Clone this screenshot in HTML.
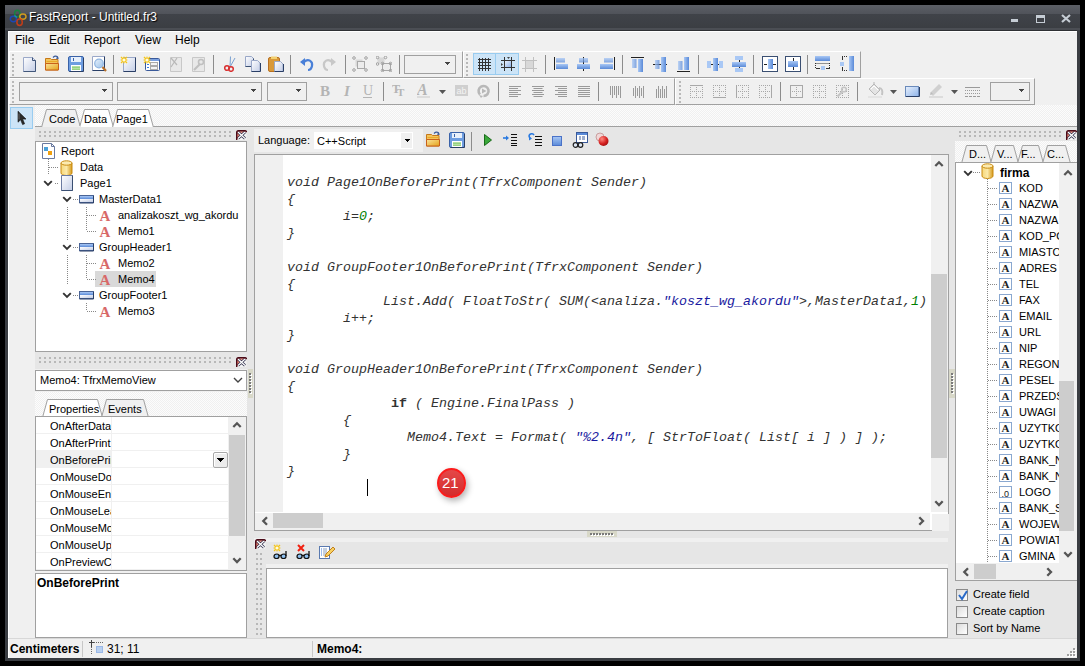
<!DOCTYPE html><html><head><meta charset="utf-8"><style>
*{margin:0;padding:0;box-sizing:border-box}
html,body{width:1085px;height:666px;overflow:hidden;background:#000}
body{position:relative;font-family:"Liberation Sans",sans-serif;font-size:11px;color:#000}
div{position:absolute}
.t{white-space:pre;line-height:13px}
.code{font-family:"Liberation Mono",monospace;font-style:italic;font-size:13.333px;white-space:pre;line-height:17px;color:#333}
</style></head><body>
<svg width="0" height="0" style="position:absolute"><defs>
<linearGradient id="gPage" x1="0" y1="0" x2="1" y2="1"><stop offset="0" stop-color="#ffffff"/><stop offset="1" stop-color="#c3cde6"/></linearGradient>
<linearGradient id="gFold" x1="0" y1="0" x2="1" y2="1"><stop offset="0" stop-color="#fbe39a"/><stop offset="1" stop-color="#e3a21a"/></linearGradient>
<linearGradient id="gBlue" x1="0" y1="0" x2="0" y2="1"><stop offset="0" stop-color="#a9c8f5"/><stop offset="1" stop-color="#5a8ad8"/></linearGradient>
<linearGradient id="gBlueH" x1="0" y1="0" x2="1" y2="0"><stop offset="0" stop-color="#a9c8f5"/><stop offset="1" stop-color="#5a8ad8"/></linearGradient>
<linearGradient id="gCyl" x1="0" y1="0" x2="1" y2="0"><stop offset="0" stop-color="#f7d87a"/><stop offset="0.5" stop-color="#fbe9a8"/><stop offset="1" stop-color="#d69a1c"/></linearGradient>
<linearGradient id="gRect" x1="0" y1="0" x2="1" y2="1"><stop offset="0" stop-color="#e8f1fd"/><stop offset="1" stop-color="#8fb4ea"/></linearGradient>
<radialGradient id="gRed" cx="0.35" cy="0.3" r="0.8"><stop offset="0" stop-color="#ff8a80"/><stop offset="0.6" stop-color="#d42020"/><stop offset="1" stop-color="#9a0c0c"/></radialGradient>
<radialGradient id="gBadge" cx="0.4" cy="0.3" r="0.8"><stop offset="0" stop-color="#ff5a4a"/><stop offset="0.7" stop-color="#e0221a"/><stop offset="1" stop-color="#b01410"/></radialGradient>
<linearGradient id="gGlass" x1="0" y1="0" x2="1" y2="1"><stop offset="0" stop-color="#e6f0fb"/><stop offset="1" stop-color="#9cc2ea"/></linearGradient>
</defs></svg>
<div style="left:5px;top:5px;width:1075px;height:656px;background:#3a3d42"></div>
<div style="left:5px;top:5px;width:1075px;height:9px;background:linear-gradient(#5c5f66,#50535a)"></div>
<div style="left:5px;top:14px;width:1075px;height:14px;background:linear-gradient(#404349,#3b3e43)"></div>
<div style="left:5px;top:28px;width:1075px;height:2px;background:#4b4e54"></div>
<div style="left:8px;top:30px;width:1069px;height:1px;background:#2e3034"></div>
<div style="left:8px;top:31px;width:1069px;height:627px;background:#f0f0f0;border-top:1px solid #fff;border-left:1px solid #fff"></div>
<div class="t" style="left:29px;top:10px;color:#fff;font-size:12px;line-height:15px;text-shadow:1px 1px 1px #000">FastReport - Untitled.fr3</div>
<div class="t" style="left:15px;top:33px;font-size:12px;line-height:15px">File</div>
<div class="t" style="left:49px;top:33px;font-size:12px;line-height:15px">Edit</div>
<div class="t" style="left:84px;top:33px;font-size:12px;line-height:15px">Report</div>
<div class="t" style="left:135px;top:33px;font-size:12px;line-height:15px">View</div>
<div class="t" style="left:175px;top:33px;font-size:12px;line-height:15px">Help</div>
<div style="left:9px;top:51px;width:454px;height:27px;background:#f0f0f0;border-top:1px solid #fff;border-left:1px solid #fff;border-bottom:1px solid #a0a0a0;border-right:1px solid #a0a0a0"></div>
<div style="left:463px;top:51px;width:398px;height:27px;background:#f0f0f0;border-top:1px solid #fff;border-left:1px solid #fff;border-bottom:1px solid #a0a0a0;border-right:1px solid #a0a0a0"></div>
<div style="left:9px;top:78px;width:666px;height:27px;background:#f0f0f0;border-top:1px solid #fff;border-left:1px solid #fff;border-bottom:1px solid #a0a0a0;border-right:1px solid #a0a0a0"></div>
<div style="left:675px;top:78px;width:360px;height:27px;background:#f0f0f0;border-top:1px solid #fff;border-left:1px solid #fff;border-bottom:1px solid #a0a0a0;border-right:1px solid #a0a0a0"></div>
<div style="left:12px;top:54px;width:3px;height:22px;background:conic-gradient(from 270deg at 2px 2px,#b8b8b8 90deg,transparent 0) 0 0/3px 4px"></div>
<div style="left:466px;top:54px;width:3px;height:22px;background:conic-gradient(from 270deg at 2px 2px,#b8b8b8 90deg,transparent 0) 0 0/3px 4px"></div>
<div style="left:12px;top:81px;width:3px;height:22px;background:conic-gradient(from 270deg at 2px 2px,#b8b8b8 90deg,transparent 0) 0 0/3px 4px"></div>
<div style="left:679px;top:81px;width:3px;height:22px;background:conic-gradient(from 270deg at 2px 2px,#b8b8b8 90deg,transparent 0) 0 0/3px 4px"></div>
<div style="left:113px;top:55px;width:1px;height:19px;background:#8c8c8c"></div>
<div style="left:213px;top:55px;width:1px;height:19px;background:#8c8c8c"></div>
<div style="left:290px;top:55px;width:1px;height:19px;background:#8c8c8c"></div>
<div style="left:345px;top:55px;width:1px;height:19px;background:#8c8c8c"></div>
<div style="left:399px;top:55px;width:1px;height:19px;background:#8c8c8c"></div>
<div style="left:545px;top:55px;width:1px;height:19px;background:#8c8c8c"></div>
<div style="left:622px;top:55px;width:1px;height:19px;background:#8c8c8c"></div>
<div style="left:698px;top:55px;width:1px;height:19px;background:#8c8c8c"></div>
<div style="left:753px;top:55px;width:1px;height:19px;background:#8c8c8c"></div>
<div style="left:807px;top:55px;width:1px;height:19px;background:#8c8c8c"></div>
<div style="left:383px;top:82px;width:1px;height:19px;background:#8c8c8c"></div>
<div style="left:498px;top:82px;width:1px;height:19px;background:#8c8c8c"></div>
<div style="left:598px;top:82px;width:1px;height:19px;background:#8c8c8c"></div>
<div style="left:780px;top:82px;width:1px;height:19px;background:#8c8c8c"></div>
<div style="left:857px;top:82px;width:1px;height:19px;background:#8c8c8c"></div>
<div style="left:404px;top:55px;width:52px;height:19px;background:#f0f0f0;border:1px solid #a0a0a0"></div>
<svg style="position:absolute;left:445px;top:62px;" width="5" height="3" viewBox="0 0 5 3" shape-rendering="crispEdges"><path d="M0 0h5L2.5 3z" fill="#444"/></svg>
<div style="left:19px;top:82px;width:94px;height:19px;background:#f0f0f0;border:1px solid #a0a0a0"></div>
<svg style="position:absolute;left:102px;top:89px;" width="5" height="3" viewBox="0 0 5 3" shape-rendering="crispEdges"><path d="M0 0h5L2.5 3z" fill="#444"/></svg>
<div style="left:117px;top:82px;width:145px;height:19px;background:#f0f0f0;border:1px solid #a0a0a0"></div>
<svg style="position:absolute;left:251px;top:89px;" width="5" height="3" viewBox="0 0 5 3" shape-rendering="crispEdges"><path d="M0 0h5L2.5 3z" fill="#444"/></svg>
<div style="left:267px;top:82px;width:40px;height:19px;background:#f0f0f0;border:1px solid #a0a0a0"></div>
<svg style="position:absolute;left:296px;top:89px;" width="5" height="3" viewBox="0 0 5 3" shape-rendering="crispEdges"><path d="M0 0h5L2.5 3z" fill="#444"/></svg>
<div style="left:990px;top:82px;width:40px;height:19px;background:#f0f0f0;border:1px solid #a0a0a0"></div>
<svg style="position:absolute;left:1019px;top:89px;" width="5" height="3" viewBox="0 0 5 3" shape-rendering="crispEdges"><path d="M0 0h5L2.5 3z" fill="#444"/></svg>
<div style="left:473px;top:53px;width:23px;height:22px;background:#cce4f7;border:1px solid #99ccf0"></div>
<div style="left:495px;top:53px;width:24px;height:22px;background:#cce4f7;border:1px solid #99ccf0"></div>
<div style="left:35px;top:105px;width:1042px;height:21px;background:conic-gradient(#f0f0f0 25%,#fcfcfc 0 50%,#f0f0f0 0 75%,#fcfcfc 0) 0 0/2px 2px"></div>
<div style="left:35px;top:126px;width:1042px;height:1px;background:#a0a0a0"></div>
<div style="left:10px;top:107px;width:23px;height:22px;background:#cce4f7;border:1px solid #99ccf0"></div>
<svg style="position:absolute;left:35px;top:109px" width="125" height="18" viewBox="0 0 125 18"><path d="M6.5 18.5 L11.5 0.5 L40.5 0.5 L45.5 18.5" fill="#f0f0f0" stroke="#a0a0a0" stroke-width="1"/><path d="M44.5 18.5 L49.5 0.5 L73.5 0.5 L78.5 18.5" fill="#fff" stroke="#a0a0a0" stroke-width="1"/><path d="M77.5 18.5 L82.5 0.5 L113.5 0.5 L118.5 18.5" fill="#fff" stroke="#a0a0a0" stroke-width="1"/></svg>
<div style="left:43px;top:126px;width:37px;height:1px;background:#f0f0f0"></div>
<div class="t" style="left:49px;top:113px;">Code</div>
<div class="t" style="left:84px;top:113px;">Data</div>
<div class="t" style="left:116px;top:113px;">Page1</div>
<div style="left:35px;top:127px;width:212px;height:14px;background:#e6e6e6"></div>
<div style="left:38px;top:130px;width:195px;height:9px;background:conic-gradient(from 270deg at 2px 2px,#b8b8b8 90deg,transparent 0) 1px 1px/5px 4px"></div>
<div style="left:35px;top:141px;width:212px;height:211px;background:#fff;border:1px solid #a0a0a0"></div>
<div style="left:35px;top:352px;width:212px;height:17px;background:#e6e6e6"></div>
<div style="left:38px;top:356px;width:195px;height:9px;background:conic-gradient(from 270deg at 2px 2px,#b8b8b8 90deg,transparent 0) 1px 1px/5px 4px"></div>
<div style="left:35px;top:370px;width:212px;height:21px;background:#fff;border:1px solid #a0a0a0"></div>
<div class="t" style="left:40px;top:374px;">Memo4: TfrxMemoView</div>
<svg style="position:absolute;left:233px;top:377px" width="10" height="6" viewBox="0 0 10 6"><path d="M1 1l4 4 4-4" fill="none" stroke="#444" stroke-width="1.4"/></svg>
<div style="left:35px;top:392px;width:212px;height:24px;background:conic-gradient(#f0f0f0 25%,#fcfcfc 0 50%,#f0f0f0 0 75%,#fcfcfc 0) 0 0/2px 2px"></div>
<svg style="position:absolute;left:35px;top:399px" width="125" height="18" viewBox="0 0 125 18"><path d="M7.5 18.5 L12.5 0.5 L62.5 0.5 L67.5 18.5" fill="#fff" stroke="#a0a0a0" stroke-width="1"/><path d="M66.5 18.5 L71.5 0.5 L108.5 0.5 L113.5 18.5" fill="#f0f0f0" stroke="#a0a0a0" stroke-width="1"/></svg>
<div class="t" style="left:49px;top:403px;">Properties</div>
<div class="t" style="left:108px;top:403px;">Events</div>
<div style="left:35px;top:416px;width:212px;height:155px;background:#fff;border:1px solid #a0a0a0"></div>
<div style="left:36px;top:433px;width:192px;height:1px;background:#f0f0f0"></div>
<div style="left:50px;top:420px;width:61px;height:14px;overflow:hidden"><div class="t" style="left:0;top:0">OnAfterData</div></div>
<div style="left:36px;top:450px;width:192px;height:1px;background:#f0f0f0"></div>
<div style="left:50px;top:437px;width:61px;height:14px;overflow:hidden"><div class="t" style="left:0;top:0">OnAfterPrint</div></div>
<div style="left:36px;top:451px;width:75px;height:17px;background:#f0f0f0"></div>
<div style="left:36px;top:467px;width:192px;height:1px;background:#f0f0f0"></div>
<div style="left:50px;top:454px;width:61px;height:14px;overflow:hidden"><div class="t" style="left:0;top:0">OnBeforePrint</div></div>
<div style="left:36px;top:484px;width:192px;height:1px;background:#f0f0f0"></div>
<div style="left:50px;top:471px;width:61px;height:14px;overflow:hidden"><div class="t" style="left:0;top:0">OnMouseDown</div></div>
<div style="left:36px;top:501px;width:192px;height:1px;background:#f0f0f0"></div>
<div style="left:50px;top:488px;width:61px;height:14px;overflow:hidden"><div class="t" style="left:0;top:0">OnMouseEnter</div></div>
<div style="left:36px;top:518px;width:192px;height:1px;background:#f0f0f0"></div>
<div style="left:50px;top:505px;width:61px;height:14px;overflow:hidden"><div class="t" style="left:0;top:0">OnMouseLeave</div></div>
<div style="left:36px;top:535px;width:192px;height:1px;background:#f0f0f0"></div>
<div style="left:50px;top:522px;width:61px;height:14px;overflow:hidden"><div class="t" style="left:0;top:0">OnMouseMove</div></div>
<div style="left:36px;top:552px;width:192px;height:1px;background:#f0f0f0"></div>
<div style="left:50px;top:539px;width:61px;height:14px;overflow:hidden"><div class="t" style="left:0;top:0">OnMouseUp</div></div>
<div style="left:36px;top:569px;width:192px;height:1px;background:#f0f0f0"></div>
<div style="left:50px;top:556px;width:61px;height:14px;overflow:hidden"><div class="t" style="left:0;top:0">OnPreviewClick</div></div>
<div style="left:111px;top:417px;width:1px;height:153px;background:#f0f0f0"></div>
<div style="left:213px;top:452px;width:15px;height:16px;background:#ececec;border:1px solid #a8a8a8;border-radius:2px;box-shadow:inset 1px 1px 0 #fff"></div>
<svg style="position:absolute;left:217px;top:458px;" width="7" height="4" viewBox="0 0 7 4" shape-rendering="crispEdges"><path d="M0 0h7L3.5 4z" fill="#000"/></svg>
<div style="left:228px;top:417px;width:18px;height:153px;background:#f0f0f0"></div>
<div style="left:229px;top:435px;width:16px;height:101px;background:#cdcdcd"></div>
<svg style="position:absolute;left:232px;top:421px" width="10" height="8" viewBox="0 0 10 8"><path d="M1.3 6l3.7-3.7 3.7 3.7" fill="none" stroke="#555" stroke-width="2.3"/></svg>
<svg style="position:absolute;left:232px;top:557px" width="10" height="8" viewBox="0 0 10 8"><path d="M1.3 1.3l3.7 3.7 3.7-3.7" fill="none" stroke="#555" stroke-width="2.3"/></svg>
<div style="left:35px;top:573px;width:212px;height:65px;background:#fff;border:1px solid #a0a0a0"></div>
<div class="t" style="left:37px;top:576px;font-weight:bold;font-size:12px;line-height:14px">OnBeforePrint</div>
<div style="left:247px;top:127px;width:708px;height:511px;background:#e6e6e6"></div>
<div style="left:254px;top:129px;width:169px;height:23px;background:#f0f0f0"></div>
<div class="t" style="left:258px;top:134px;">Language:</div>
<div style="left:314px;top:132px;width:99px;height:17px;background:#fff"></div>
<div style="left:401px;top:133px;width:11px;height:15px;background:#f0f0f0"></div>
<svg style="position:absolute;left:404px;top:139px;" width="6" height="3" viewBox="0 0 6 3" shape-rendering="crispEdges"><path d="M0 0h6L3 3z" fill="#000"/></svg>
<div class="t" style="left:317px;top:135px;">C++Script</div>
<div style="left:471px;top:132px;width:1px;height:19px;background:#8c8c8c"></div>
<div style="left:254px;top:154px;width:695px;height:377px;background:#fff;border:1px solid #a0a0a0"></div>
<div style="left:255px;top:155px;width:28px;height:357px;background:#f0f0f0"></div>
<div style="left:931px;top:155px;width:17px;height:357px;background:#f0f0f0"></div>
<div style="left:931px;top:274px;width:16px;height:184px;background:#cdcdcd"></div>
<svg style="position:absolute;left:934px;top:160px" width="10" height="8" viewBox="0 0 10 8"><path d="M1.3 6l3.7-3.7 3.7 3.7" fill="none" stroke="#555" stroke-width="2.3"/></svg>
<svg style="position:absolute;left:934px;top:500px" width="10" height="8" viewBox="0 0 10 8"><path d="M1.3 1.3l3.7 3.7 3.7-3.7" fill="none" stroke="#555" stroke-width="2.3"/></svg>
<div style="left:255px;top:513px;width:675px;height:17px;background:#f0f0f0"></div>
<div style="left:273px;top:513px;width:50px;height:15px;background:#cdcdcd"></div>
<svg style="position:absolute;left:261px;top:516px" width="8" height="10" viewBox="0 0 8 10"><path d="M6 1.3l-3.7 3.7 3.7 3.7" fill="none" stroke="#555" stroke-width="2.3"/></svg>
<svg style="position:absolute;left:918px;top:516px" width="8" height="10" viewBox="0 0 8 10"><path d="M1.3 1.3l3.7 3.7-3.7 3.7" fill="none" stroke="#555" stroke-width="2.3"/></svg>
<div style="left:932px;top:514px;width:17px;height:17px;background:#f0f0f0"></div>
<div style="left:587px;top:531px;width:30px;height:6px;background:#d8d8c8"></div>
<div style="left:590px;top:533px;width:2px;height:2px;background:#7a7a7a;box-shadow:1px 1px 0 #fff"></div>
<div style="left:593px;top:533px;width:2px;height:2px;background:#7a7a7a;box-shadow:1px 1px 0 #fff"></div>
<div style="left:596px;top:533px;width:2px;height:2px;background:#7a7a7a;box-shadow:1px 1px 0 #fff"></div>
<div style="left:599px;top:533px;width:2px;height:2px;background:#7a7a7a;box-shadow:1px 1px 0 #fff"></div>
<div style="left:602px;top:533px;width:2px;height:2px;background:#7a7a7a;box-shadow:1px 1px 0 #fff"></div>
<div style="left:605px;top:533px;width:2px;height:2px;background:#7a7a7a;box-shadow:1px 1px 0 #fff"></div>
<div style="left:608px;top:533px;width:2px;height:2px;background:#7a7a7a;box-shadow:1px 1px 0 #fff"></div>
<div style="left:611px;top:533px;width:2px;height:2px;background:#7a7a7a;box-shadow:1px 1px 0 #fff"></div>
<div style="left:248px;top:369px;width:5px;height:29px;background:#d8d8c8"></div>
<div style="left:249px;top:373px;width:2px;height:2px;background:#7a7a7a;box-shadow:1px 1px 0 #fff"></div>
<div style="left:249px;top:376px;width:2px;height:2px;background:#7a7a7a;box-shadow:1px 1px 0 #fff"></div>
<div style="left:249px;top:379px;width:2px;height:2px;background:#7a7a7a;box-shadow:1px 1px 0 #fff"></div>
<div style="left:249px;top:382px;width:2px;height:2px;background:#7a7a7a;box-shadow:1px 1px 0 #fff"></div>
<div style="left:249px;top:385px;width:2px;height:2px;background:#7a7a7a;box-shadow:1px 1px 0 #fff"></div>
<div style="left:249px;top:388px;width:2px;height:2px;background:#7a7a7a;box-shadow:1px 1px 0 #fff"></div>
<div style="left:249px;top:391px;width:2px;height:2px;background:#7a7a7a;box-shadow:1px 1px 0 #fff"></div>
<div style="left:949px;top:369px;width:6px;height:29px;background:#d8d8c8"></div>
<div style="left:951px;top:373px;width:2px;height:2px;background:#7a7a7a;box-shadow:1px 1px 0 #fff"></div>
<div style="left:951px;top:376px;width:2px;height:2px;background:#7a7a7a;box-shadow:1px 1px 0 #fff"></div>
<div style="left:951px;top:379px;width:2px;height:2px;background:#7a7a7a;box-shadow:1px 1px 0 #fff"></div>
<div style="left:951px;top:382px;width:2px;height:2px;background:#7a7a7a;box-shadow:1px 1px 0 #fff"></div>
<div style="left:951px;top:385px;width:2px;height:2px;background:#7a7a7a;box-shadow:1px 1px 0 #fff"></div>
<div style="left:951px;top:388px;width:2px;height:2px;background:#7a7a7a;box-shadow:1px 1px 0 #fff"></div>
<div style="left:951px;top:391px;width:2px;height:2px;background:#7a7a7a;box-shadow:1px 1px 0 #fff"></div>
<div style="left:538px;top:538px;width:410px;height:4px;background:#f0f0f0"></div>
<div style="left:254px;top:538px;width:694px;height:4px;background:#f0f0f0"></div>
<div style="left:270px;top:542px;width:676px;height:22px;background:#e6e6e6"></div>
<div style="left:266px;top:564px;width:682px;height:4px;background:#f0f0f0"></div>
<div style="left:255px;top:550px;width:8px;height:87px;background:conic-gradient(from 270deg at 2px 2px,#b8b8b8 90deg,transparent 0) 1px 3px/4px 5px"></div>
<div style="left:266px;top:568px;width:682px;height:70px;background:#fff;border:1px solid #a0a0a0"></div>
<div style="left:955px;top:127px;width:122px;height:14px;background:#e6e6e6"></div>
<div style="left:958px;top:130px;width:105px;height:9px;background:conic-gradient(from 270deg at 2px 2px,#b8b8b8 90deg,transparent 0) 1px 1px/5px 4px"></div>
<div style="left:955px;top:141px;width:122px;height:22px;background:conic-gradient(#f0f0f0 25%,#fcfcfc 0 50%,#f0f0f0 0 75%,#fcfcfc 0) 0 0/2px 2px"></div>
<div style="left:955px;top:162px;width:122px;height:1px;background:#a0a0a0"></div>
<svg style="position:absolute;left:955px;top:145px" width="122" height="18" viewBox="0 0 122 18"><path d="M6.5 18.5 L11.5 0.5 L31.5 0.5 L36.5 18.5" fill="#f0f0f0" stroke="#a0a0a0" stroke-width="1"/><path d="M35.5 18.5 L40.5 0.5 L58.5 0.5 L63.5 18.5" fill="#f0f0f0" stroke="#a0a0a0" stroke-width="1"/><path d="M62.5 18.5 L67.5 0.5 L83.5 0.5 L88.5 18.5" fill="#f0f0f0" stroke="#a0a0a0" stroke-width="1"/><path d="M87.5 18.5 L92.5 0.5 L110.5 0.5 L115.5 18.5" fill="#f0f0f0" stroke="#a0a0a0" stroke-width="1"/></svg>
<div class="t" style="left:969px;top:148px;">D...</div>
<div class="t" style="left:997px;top:148px;">V...</div>
<div class="t" style="left:1021px;top:148px;">F...</div>
<div class="t" style="left:1047px;top:148px;">C...</div>
<div style="left:955px;top:162px;width:122px;height:419px;background:#fff;border-left:1px solid #a0a0a0;border-top:1px solid #a0a0a0;border-bottom:1px solid #a0a0a0"></div>
<div style="left:1059px;top:163px;width:18px;height:400px;background:#f0f0f0"></div>
<div style="left:1059px;top:381px;width:15px;height:150px;background:#cdcdcd"></div>
<div style="left:956px;top:563px;width:103px;height:17px;background:#f0f0f0"></div>
<div style="left:974px;top:564px;width:22px;height:15px;background:#cdcdcd"></div>
<div style="left:1059px;top:563px;width:18px;height:17px;background:#f0f0f0"></div>
<div style="left:955px;top:581px;width:122px;height:57px;background:#e6e6e6"></div>
<div style="left:956px;top:589px;width:12px;height:12px;background:linear-gradient(135deg,#dcdcdc,#fff);border:1px solid #8a8a8a"></div>
<div class="t" style="left:973px;top:588px;">Create field</div>
<div style="left:956px;top:606px;width:12px;height:12px;background:linear-gradient(135deg,#dcdcdc,#fff);border:1px solid #8a8a8a"></div>
<div class="t" style="left:973px;top:605px;">Create caption</div>
<div style="left:956px;top:623px;width:12px;height:12px;background:linear-gradient(135deg,#dcdcdc,#fff);border:1px solid #8a8a8a"></div>
<div class="t" style="left:973px;top:622px;">Sort by Name</div>
<div style="left:8px;top:638px;width:1069px;height:1px;background:#d8d8d8"></div>
<div class="t" style="left:10px;top:642px;font-weight:bold;font-size:12px;line-height:14px">Centimeters</div>
<div style="left:82px;top:641px;width:1px;height:16px;background:#c8c8c8"></div>
<div class="t" style="left:107px;top:642px;font-size:12px;line-height:14px">31; 11</div>
<div style="left:312px;top:641px;width:1px;height:16px;background:#c8c8c8"></div>
<div class="t" style="left:317px;top:642px;font-weight:bold;font-size:12px;line-height:14px">Memo4:</div>
<div class="t" style="left:61px;top:145px;">Report</div>
<div class="t" style="left:80px;top:161px;">Data</div>
<div class="t" style="left:80px;top:177px;">Page1</div>
<div class="t" style="left:99px;top:193px;">MasterData1</div>
<div class="t" style="left:118px;top:209px;">analizakoszt_wg_akordu</div>
<div class="t" style="left:118px;top:225px;">Memo1</div>
<div class="t" style="left:99px;top:241px;">GroupHeader1</div>
<div class="t" style="left:118px;top:257px;">Memo2</div>
<div style="left:95px;top:271px;width:61px;height:16px;background:#d9d9d9"></div>
<div class="t" style="left:118px;top:273px;">Memo4</div>
<div class="t" style="left:99px;top:289px;">GroupFooter1</div>
<div class="t" style="left:118px;top:305px;">Memo3</div>
<div style="left:283px;top:155px;width:648px;height:357px;overflow:hidden">
<div class="code" style="left:4px;top:2px">
void Page1OnBeforePrint(TfrxComponent Sender)
{
       i=<span style="color:#008000">0</span>;
}

void GroupFooter1OnBeforePrint(TfrxComponent Sender)
{
            List.Add( FloatToStr( SUM(&lt;analiza.<span style="color:#1a1aa0">"koszt_wg_akordu"</span>&gt;,MasterData1,<span style="color:#008000">1</span>)
       i++;
}

void GroupHeader1OnBeforePrint(TfrxComponent Sender)
{
             <b style='font-style:normal'>if</b> ( Engine.FinalPass )
       {
               Memo4.Text = Format( <span style="color:#1a1aa0">"%2.4n"</span>, [ StrToFloat( List[ i ] ) ] );
       }
}</div>
</div>
<div style="left:367px;top:479px;width:1px;height:17px;background:#000"></div>
<svg style="position:absolute;left:9px;top:9px" width="20" height="20" viewBox="0 0 20 20"><ellipse cx="8.3" cy="4.6" rx="2.7" ry="3.3" fill="none" stroke="#0f8a3a" stroke-width="1.5" opacity=".85"/><ellipse cx="13.9" cy="7.6" rx="3.1" ry="2.7" fill="none" stroke="#e8a818" stroke-width="1.5" opacity=".85"/><ellipse cx="4.4" cy="10" rx="3.1" ry="2.7" fill="none" stroke="#1848c8" stroke-width="1.5" opacity=".85"/><ellipse cx="10.6" cy="13.3" rx="2.7" ry="3.2" fill="none" stroke="#d83c10" stroke-width="1.5" opacity=".85"/><path d="M5.5 6.5l2.5 2" stroke="#1a9a9a" stroke-width="1.2"/></svg>
<div style="left:1011px;top:19px;width:7px;height:3px;background:#c5ccd4"></div>
<div style="left:1036px;top:15px;width:9px;height:8px;border:1px solid #c5ccd4;border-top-width:3px"></div>
<svg style="position:absolute;left:1061px;top:14px" width="10" height="9" viewBox="0 0 10 9"><path d="M1 1l8 7M9 1l-8 7" stroke="#c5ccd4" stroke-width="2.2"/></svg>
<svg style="position:absolute;left:22px;top:56px" width="16" height="16" viewBox="0 0 16 16"><path d="M1.5 1.5h9l3 3v11h-12z" fill="url(#gPage)" stroke="#9aa8c8"/><path d="M13.5 4.5v11h-12" fill="none" stroke="#42577a"/><path d="M10.5 1.5v3h3" fill="none" stroke="#42577a"/></svg>
<svg style="position:absolute;left:44px;top:55px" width="16" height="16" viewBox="0 0 16 16"><path d="M1.5 3.5h5l1 1h6.5v10.5h-12.5z" fill="#f3c45a" stroke="#c77818"/><path d="M2.5 6.5h11" stroke="#e9a92b"/><path d="M1.5 8.5h13v6.5h-13z" fill="url(#gFold)" stroke="#c8601a"/><path d="M9 2.5c2-2 4-1.5 5 0" fill="none" stroke="#3a5a9a" stroke-width="1.2"/><path d="M13 1l2 2.5-2.8 .8z" fill="#3a5a9a"/></svg>
<svg style="position:absolute;left:68px;top:56px" width="16" height="16" viewBox="0 0 16 16"><rect x="0.5" y="0.5" width="15" height="15" rx="1.5" fill="#6e9de0" stroke="#3a62a8"/><rect x="3" y="1" width="10" height="5" fill="#e8f0fb"/><rect x="5" y="2" width="1" height="3" fill="#3a62a8"/><rect x="3" y="9" width="10" height="6" fill="#fff"/><rect x="4" y="10.5" width="8" height="1.2" fill="#6cbf4a"/><rect x="4" y="12.5" width="8" height="1.2" fill="#6cbf4a"/><path d="M15.5 2v13.5h-14" fill="none" stroke="#2a3f66"/></svg>
<svg style="position:absolute;left:91px;top:56px" width="16" height="16" viewBox="0 0 16 16"><path d="M1.5 .5h12v14h-12z" fill="#fff" stroke="#9aa8c8"/><path d="M13.5 .5v14h-12" fill="none" stroke="#2a3f66"/><circle cx="8" cy="7.5" r="4.3" fill="url(#gGlass)" stroke="#8fb4e0" stroke-width="1.2"/><path d="M11.5 11l3.5 4" stroke="#b8702a" stroke-width="2.2"/></svg>
<svg style="position:absolute;left:120px;top:56px" width="16" height="16" viewBox="0 0 16 16"><path d="M3.5 1.5h12v14h-12z" fill="url(#gPage)" stroke="#9aa8c8"/><path d="M15.5 1.5v14h-12" fill="none" stroke="#2a3f66"/><path d="M4 0L5.2 2.8L8 4L5.2 5.2L4 8L2.8 5.2L0 4L2.8 2.8z" fill="#f5c518"/><path d="M1 1L7 7M7 1L1 7" stroke="#f5c518" stroke-width="1.3"/><circle cx="4" cy="4" r="1.6" fill="#fffbe0"/></svg>
<svg style="position:absolute;left:168px;top:56px" width="16" height="16" viewBox="0 0 16 16"><path d="M2.5 1.5h11v14h-11z" fill="#e8e8e8" stroke="#c8c8c8"/><path d="M3 2l6 7M9 2l-6 9" stroke="#b8b8b8" stroke-width="1.2"/></svg>
<svg style="position:absolute;left:190px;top:56px" width="16" height="16" viewBox="0 0 16 16"><path d="M2.5 1.5h12v14h-12z" fill="#e8e8e8" stroke="#c8c8c8"/><path d="M4 14l6-6" stroke="#c0c0c0" stroke-width="2.2"/><circle cx="11" cy="6" r="2.5" fill="none" stroke="#c0c0c0" stroke-width="1.6"/></svg>
<svg style="position:absolute;left:223px;top:56px" width="16" height="16" viewBox="0 0 16 16"><path d="M7.5 0.5l-0.5 10M12 2l-5 9" stroke="#7aa0d0" stroke-width="1" fill="none"/><circle cx="4" cy="12" r="2.3" fill="none" stroke="#d83030" stroke-width="1.5"/><circle cx="8" cy="13" r="2.3" fill="none" stroke="#d83030" stroke-width="1.5"/></svg>
<svg style="position:absolute;left:245px;top:56px" width="16" height="16" viewBox="0 0 16 16"><path d="M0.5 .5h6l2 2v8h-8z" fill="url(#gPage)" stroke="#9aa8c8"/><path d="M8.5 2.5v8h-8" fill="none" stroke="#3a4f72"/><path d="M6.5 4.5h6l2.5 2.5v8.5h-8.5z" fill="url(#gPage)" stroke="#9aa8c8"/><path d="M15.5 7v8.5h-9" fill="none" stroke="#2a3f66"/></svg>
<svg style="position:absolute;left:268px;top:56px" width="16" height="16" viewBox="0 0 16 16"><rect x="0.5" y="1.5" width="11" height="14" rx="1.5" fill="#d9993a" stroke="#b87020"/><rect x="3" y="0.5" width="6" height="2.5" fill="#f3d070"/><path d="M6.5 5.5h6l2.5 2.5v7.5h-8.5z" fill="url(#gPage)" stroke="#9aa8c8"/><path d="M15.5 8v7.5h-9" fill="none" stroke="#2a3f66"/></svg>
<svg style="position:absolute;left:299px;top:56px" width="16" height="16" viewBox="0 0 16 16"><path d="M5 6c4-4 9-1 8 4-.6 3-2.5 4-4 4" fill="none" stroke="#4a80d8" stroke-width="2.2"/><path d="M1 6l5-4v8z" fill="#4a80d8"/></svg>
<svg style="position:absolute;left:321px;top:56px" width="16" height="16" viewBox="0 0 16 16"><g transform="translate(16 0) scale(-1 1)"><path d="M5 6c4-4 9-1 8 4-.6 3-2.5 4-4 4" fill="none" stroke="#c8c8c8" stroke-width="2.2"/><path d="M1 6l5-4v8z" fill="#c8c8c8"/></g></svg>
<svg style="position:absolute;left:352px;top:56px" width="16" height="16" viewBox="0 0 16 16"><rect x="3.5" y="3.5" width="7" height="7" fill="#d8d8d8"/><rect x="5.5" y="5.5" width="7" height="7" fill="#ececec" stroke="#a8a8a8"/><circle cx="2" cy="2" r="1.3" fill="none" stroke="#a0a0a0"/><circle cx="14" cy="2" r="1.3" fill="none" stroke="#a0a0a0"/><circle cx="2" cy="14" r="1.3" fill="none" stroke="#a0a0a0"/><circle cx="14" cy="14" r="1.3" fill="none" stroke="#a0a0a0"/></svg>
<svg style="position:absolute;left:376px;top:56px" width="16" height="16" viewBox="0 0 16 16"><rect x="1.5" y="1.5" width="7" height="6" fill="#d8d8d8"/><rect x="6.5" y="7.5" width="8" height="7" fill="#ececec" stroke="#a8a8a8"/><circle cx="1.5" cy="1.5" r="1.3" fill="none" stroke="#a0a0a0"/><circle cx="9.5" cy="1.5" r="1.3" fill="none" stroke="#a0a0a0"/><circle cx="1.5" cy="8" r="1.3" fill="none" stroke="#a0a0a0"/><circle cx="6.5" cy="7.5" r="1.3" fill="none" stroke="#a0a0a0"/><circle cx="14.5" cy="7.5" r="1.3" fill="none" stroke="#a0a0a0"/><circle cx="6.5" cy="14.5" r="1.3" fill="none" stroke="#a0a0a0"/><circle cx="14.5" cy="14.5" r="1.3" fill="none" stroke="#a0a0a0"/></svg>
<svg style="position:absolute;left:475px;top:55px" width="16" height="16" viewBox="0 0 16 16"><path d="M3 4.5h13M3 7.5h13M3 10.5h13M3 13.5h13M4.5 3v13M7.5 3v13M10.5 3v13M13.5 3v13" stroke="#333" stroke-width="1"/></svg>
<svg style="position:absolute;left:499px;top:55px" width="16" height="16" viewBox="0 0 16 16"><rect x="6" y="6" width="6" height="6" fill="url(#gRect)"/><path d="M2 5.5h14M2 12.5h14M5.5 2v14M12.5 2v14" stroke="#333"/><path d="M8 2h3l-1.5 2z" fill="#444"/><path d="M2 8v3l2-1.5z" fill="#444"/></svg>
<svg style="position:absolute;left:521px;top:56px" width="16" height="16" viewBox="0 0 16 16"><rect x="4" y="4" width="9" height="9" fill="#d8d8d8"/><path d="M1 4.5h15M1 12.5h15M4.5 1v15M12.5 1v15" stroke="#c0c0c0"/></svg>
<svg style="position:absolute;left:815px;top:56px" width="16" height="16" viewBox="0 0 16 16"><rect x="0" y="0" width="15" height="5" fill="url(#gBlue)"/><rect x="6" y="10" width="4" height="4" fill="#a9c8f5"/><path d="M0.5 7v5M14.5 7v5M0.5 7.5h14" stroke="#333" stroke-dasharray="1 1"/><path d="M1 12.5h4M11 12.5h4" stroke="#333"/></svg>
<svg style="position:absolute;left:839px;top:56px" width="16" height="16" viewBox="0 0 16 16"><rect x="10" y="0" width="5" height="15" fill="url(#gBlueH)"/><rect x="1" y="6" width="4" height="4" fill="#a9c8f5"/><path d="M3 0.5h6M3 14.5h6" stroke="#333" stroke-dasharray="1 1"/><path d="M3.5 1v3M3.5 11v4" stroke="#333"/></svg>
<svg style="position:absolute;left:707px;top:56px" width="16" height="16" viewBox="0 0 16 16"><rect x="0" y="5" width="4" height="7" fill="#a9c8f5"/><rect x="6" y="2" width="5" height="13" fill="url(#gBlueH)"/><rect x="12" y="5" width="4" height="7" fill="#a9c8f5"/><path d="M4 8.5h2M11 8.5h1" stroke="#222"/></svg>
<svg style="position:absolute;left:731px;top:56px" width="16" height="16" viewBox="0 0 16 16"><rect x="4" y="0" width="8" height="4" fill="#a9c8f5"/><rect x="1" y="6" width="14" height="5" fill="url(#gBlue)"/><rect x="4" y="12" width="8" height="4" fill="#a9c8f5"/><path d="M8.5 4v2M8.5 11v1" stroke="#222"/></svg>
<svg style="position:absolute;left:762px;top:56px" width="16" height="16" viewBox="0 0 16 16"><rect x="0.5" y="0.5" width="15" height="15" fill="#fff" stroke="#3a4f72"/><rect x="6" y="3" width="5" height="10" fill="url(#gBlueH)"/><path d="M2 8.5h3M11 8.5h3" stroke="#222"/></svg>
<svg style="position:absolute;left:785px;top:56px" width="16" height="16" viewBox="0 0 16 16"><rect x="0.5" y="0.5" width="15" height="15" fill="#fff" stroke="#3a4f72"/><rect x="3" y="5" width="10" height="6" fill="url(#gBlue)"/><path d="M8.5 2v3M8.5 11v3" stroke="#222"/></svg>
<svg style="position:absolute;left:143px;top:56px" width="18" height="16" viewBox="0 0 18 16"><rect x="2.5" y="2.5" width="14" height="12" rx="1" fill="#fff" stroke="#3a5a9a"/><rect x="3" y="3" width="13" height="2" fill="#7aa0e0"/><path d="M4 8.5h2M4 11.5h2" stroke="#3a7ae0"/><rect x="7.5" y="6.5" width="7" height="3" fill="#f4f4f4" stroke="#aaa"/><rect x="7.5" y="10.5" width="7" height="3" fill="#f4f4f4" stroke="#aaa"/><path d="M4 0L5.2 2.8L8 4L5.2 5.2L4 8L2.8 5.2L0 4L2.8 2.8z" fill="#f5c518"/><path d="M1 1L7 7M7 1L1 7" stroke="#f5c518" stroke-width="1.3"/><circle cx="4" cy="4" r="1.6" fill="#fffbe0"/></svg>
<svg style="position:absolute;left:553px;top:56px" width="16" height="16" viewBox="0 0 16 16"><path d="M1.5 1v13" stroke="#222"/><rect x="3" y="2" width="9" height="4.5" fill="url(#gBlue)" opacity=".75"/><rect x="3" y="8" width="12" height="5" fill="url(#gBlue)"/></svg>
<svg style="position:absolute;left:575px;top:56px" width="16" height="16" viewBox="0 0 16 16"><path d="M8.5 1v14" stroke="#222"/><rect x="4" y="2" width="9" height="4.5" fill="url(#gBlue)" opacity=".75"/><rect x="2" y="8" width="13" height="5" fill="url(#gBlue)"/></svg>
<svg style="position:absolute;left:599px;top:56px" width="16" height="16" viewBox="0 0 16 16"><path d="M15.5 1v13" stroke="#222"/><rect x="5" y="2" width="9" height="4.5" fill="url(#gBlue)" opacity=".75"/><rect x="1" y="8" width="13" height="5" fill="url(#gBlue)"/></svg>
<svg style="position:absolute;left:631px;top:56px" width="16" height="16" viewBox="0 0 16 16"><path d="M0 1.5h13" stroke="#222"/><rect x="1" y="3" width="4.5" height="9" fill="url(#gBlueH)" opacity=".75"/><rect x="7" y="3" width="5" height="13" fill="url(#gBlueH)"/></svg>
<svg style="position:absolute;left:653px;top:56px" width="16" height="16" viewBox="0 0 16 16"><path d="M0 8.5h14" stroke="#222"/><rect x="2" y="4" width="4.5" height="9" fill="url(#gBlueH)" opacity=".75"/><rect x="8" y="1" width="5" height="15" fill="url(#gBlueH)"/></svg>
<svg style="position:absolute;left:677px;top:56px" width="16" height="16" viewBox="0 0 16 16"><path d="M0 15.5h13" stroke="#222"/><rect x="1" y="5" width="4.5" height="9" fill="url(#gBlueH)" opacity=".75"/><rect x="7" y="1" width="5" height="13" fill="url(#gBlueH)"/></svg>
<svg style="position:absolute;left:318px;top:83px" width="16" height="16" viewBox="0 0 16 16"><text x="2" y="13" font-family="Liberation Serif" font-weight="bold" font-size="15" fill="#b4b4b4">B</text></svg>
<svg style="position:absolute;left:341px;top:83px" width="16" height="16" viewBox="0 0 16 16"><text x="3" y="13" font-family="Liberation Serif" font-style="italic" font-weight="bold" font-size="15" fill="#b4b4b4">I</text></svg>
<svg style="position:absolute;left:362px;top:83px" width="16" height="16" viewBox="0 0 16 16"><text x="1" y="12" font-family="Liberation Serif" font-size="14" fill="#b4b4b4">U</text><path d="M1 14.5h9" stroke="#b4b4b4"/></svg>
<svg style="position:absolute;left:392px;top:83px" width="16" height="16" viewBox="0 0 16 16"><text x="0" y="10" font-family="Liberation Serif" font-weight="bold" font-size="12" fill="#b4b4b4">T</text><text x="5" y="13" font-family="Liberation Serif" font-weight="bold" font-size="11" fill="#b4b4b4">T</text></svg>
<svg style="position:absolute;left:417px;top:82px" width="16" height="16" viewBox="0 0 16 16"><text x="0" y="13" font-family="Liberation Serif" font-style="italic" font-weight="bold" font-size="16" fill="#b4b4b4">A</text><rect x="0" y="14" width="13" height="2" fill="#dcdcdc"/></svg>
<svg style="position:absolute;left:455px;top:84px" width="16" height="16" viewBox="0 0 16 16"><rect x="0" y="1" width="13" height="11" fill="#cfcfcf"/><text x="1.5" y="10" font-family="Liberation Sans" font-size="9" fill="#f4f4f4">ab</text></svg>
<svg style="position:absolute;left:476px;top:83px" width="16" height="16" viewBox="0 0 16 16"><path d="M4 11.5A5 5 0 1 1 7.5 13" fill="none" stroke="#b8b8b8" stroke-width="2.6"/><path d="M6 5.5l4.5 2.5-4.5 2.5z" fill="#b8b8b8"/><path d="M3 12l2 3 2-2" fill="#b8b8b8"/></svg>
<svg style="position:absolute;left:868px;top:82px" width="16" height="16" viewBox="0 0 16 16"><path d="M1 7l5-5 6 6-5 5z" fill="#e4e4e4" stroke="#b8b8b8"/><path d="M3 7l3-3 4 4" fill="none" stroke="#fff"/><path d="M6 2V0" stroke="#b4b4b4"/><path d="M11 6c3 0 4 3 3 7" fill="none" stroke="#c4c4c4" stroke-width="2"/><rect x="0" y="14" width="14" height="2" fill="#e4e4e4"/></svg>
<svg style="position:absolute;left:905px;top:86px" width="16" height="16" viewBox="0 0 16 16"><rect x="0.5" y="0.5" width="13" height="10" fill="url(#gRect)" stroke="#6a8aba"/><path d="M1 10.5h13.5V1" fill="none" stroke="#2a3f66"/></svg>
<svg style="position:absolute;left:929px;top:82px" width="16" height="16" viewBox="0 0 16 16"><path d="M1 11l9-9 3 3-9 9z" fill="#d0d0d0"/><path d="M2 10l-1 3 3-1" fill="#bbb"/><rect x="0" y="14" width="14" height="2" fill="#dcdcdc"/></svg>
<svg style="position:absolute;left:965px;top:86px" width="16" height="16" viewBox="0 0 16 16"><path d="M0 1.5h15" stroke="#9a9a9a"/><path d="M0 4.5h15M0 7.5h15" stroke="#9a9a9a" stroke-dasharray="1 1"/><path d="M0 10.5h15" stroke="#9a9a9a" stroke-dasharray="3 1"/></svg>
<svg style="position:absolute;left:439px;top:90px" width="8" height="5" viewBox="0 0 8 5"><path d="M0 0h7L3.5 4z" fill="#555"/></svg>
<svg style="position:absolute;left:890px;top:90px" width="8" height="5" viewBox="0 0 8 5"><path d="M0 0h7L3.5 4z" fill="#555"/></svg>
<svg style="position:absolute;left:951px;top:90px" width="8" height="5" viewBox="0 0 8 5"><path d="M0 0h7L3.5 4z" fill="#555"/></svg>
<svg style="position:absolute;left:509px;top:86px" width="13" height="12" viewBox="0 0 13 12"><rect x="0" y="0" width="12" height="1" fill="#9a9a9a"/><rect x="0" y="2" width="9" height="1" fill="#9a9a9a"/><rect x="0" y="4" width="12" height="1" fill="#9a9a9a"/><rect x="0" y="6" width="9" height="1" fill="#9a9a9a"/><rect x="0" y="8" width="12" height="1" fill="#9a9a9a"/><rect x="0" y="10" width="9" height="1" fill="#9a9a9a"/></svg>
<svg style="position:absolute;left:532px;top:86px" width="13" height="12" viewBox="0 0 13 12"><rect x="0.0" y="0" width="12" height="1" fill="#9a9a9a"/><rect x="1.5" y="2" width="9" height="1" fill="#9a9a9a"/><rect x="0.0" y="4" width="12" height="1" fill="#9a9a9a"/><rect x="1.5" y="6" width="9" height="1" fill="#9a9a9a"/><rect x="0.0" y="8" width="12" height="1" fill="#9a9a9a"/><rect x="1.5" y="10" width="9" height="1" fill="#9a9a9a"/></svg>
<svg style="position:absolute;left:555px;top:86px" width="13" height="12" viewBox="0 0 13 12"><rect x="0" y="0" width="12" height="1" fill="#9a9a9a"/><rect x="3" y="2" width="9" height="1" fill="#9a9a9a"/><rect x="0" y="4" width="12" height="1" fill="#9a9a9a"/><rect x="3" y="6" width="9" height="1" fill="#9a9a9a"/><rect x="0" y="8" width="12" height="1" fill="#9a9a9a"/><rect x="3" y="10" width="9" height="1" fill="#9a9a9a"/></svg>
<svg style="position:absolute;left:578px;top:86px" width="13" height="12" viewBox="0 0 13 12"><rect x="0" y="0" width="12" height="1" fill="#9a9a9a"/><rect x="0" y="2" width="12" height="1" fill="#9a9a9a"/><rect x="0" y="4" width="12" height="1" fill="#9a9a9a"/><rect x="0" y="6" width="12" height="1" fill="#9a9a9a"/><rect x="0" y="8" width="12" height="1" fill="#9a9a9a"/><rect x="0" y="10" width="12" height="1" fill="#9a9a9a"/></svg>
<svg style="position:absolute;left:610px;top:86px" width="13" height="12" viewBox="0 0 13 12"><rect x="0" y="0" width="1" height="9" fill="#9a9a9a"/><rect x="2" y="0" width="1" height="12" fill="#9a9a9a"/><rect x="4" y="0" width="1" height="9" fill="#9a9a9a"/><rect x="6" y="0" width="1" height="12" fill="#9a9a9a"/><rect x="8" y="0" width="1" height="9" fill="#9a9a9a"/><rect x="10" y="0" width="1" height="12" fill="#9a9a9a"/></svg>
<svg style="position:absolute;left:633px;top:86px" width="13" height="12" viewBox="0 0 13 12"><rect x="0" y="2" width="1" height="8" fill="#9a9a9a"/><rect x="2" y="0" width="1" height="12" fill="#9a9a9a"/><rect x="4" y="2" width="1" height="8" fill="#9a9a9a"/><rect x="6" y="0" width="1" height="12" fill="#9a9a9a"/><rect x="8" y="2" width="1" height="8" fill="#9a9a9a"/><rect x="10" y="0" width="1" height="12" fill="#9a9a9a"/></svg>
<svg style="position:absolute;left:656px;top:86px" width="13" height="12" viewBox="0 0 13 12"><rect x="0" y="3" width="1" height="9" fill="#9a9a9a"/><rect x="2" y="0" width="1" height="12" fill="#9a9a9a"/><rect x="4" y="3" width="1" height="9" fill="#9a9a9a"/><rect x="6" y="0" width="1" height="12" fill="#9a9a9a"/><rect x="8" y="3" width="1" height="9" fill="#9a9a9a"/><rect x="10" y="0" width="1" height="12" fill="#9a9a9a"/></svg>
<svg style="position:absolute;left:690px;top:85px" width="13" height="13" viewBox="0 0 13 13"><rect x="0" y="0" width="1" height="1" fill="#a8a8a8"/><rect x="0" y="2" width="1" height="1" fill="#a8a8a8"/><rect x="0" y="4" width="1" height="1" fill="#a8a8a8"/><rect x="0" y="6" width="1" height="1" fill="#a8a8a8"/><rect x="0" y="8" width="1" height="1" fill="#a8a8a8"/><rect x="0" y="10" width="1" height="1" fill="#a8a8a8"/><rect x="0" y="12" width="1" height="1" fill="#a8a8a8"/><rect x="2" y="0" width="1" height="1" fill="#a8a8a8"/><rect x="2" y="6" width="1" height="1" fill="#a8a8a8"/><rect x="2" y="12" width="1" height="1" fill="#a8a8a8"/><rect x="4" y="0" width="1" height="1" fill="#a8a8a8"/><rect x="4" y="6" width="1" height="1" fill="#a8a8a8"/><rect x="4" y="12" width="1" height="1" fill="#a8a8a8"/><rect x="6" y="0" width="1" height="1" fill="#a8a8a8"/><rect x="6" y="2" width="1" height="1" fill="#a8a8a8"/><rect x="6" y="4" width="1" height="1" fill="#a8a8a8"/><rect x="6" y="6" width="1" height="1" fill="#a8a8a8"/><rect x="6" y="8" width="1" height="1" fill="#a8a8a8"/><rect x="6" y="10" width="1" height="1" fill="#a8a8a8"/><rect x="6" y="12" width="1" height="1" fill="#a8a8a8"/><rect x="8" y="0" width="1" height="1" fill="#a8a8a8"/><rect x="8" y="6" width="1" height="1" fill="#a8a8a8"/><rect x="8" y="12" width="1" height="1" fill="#a8a8a8"/><rect x="10" y="0" width="1" height="1" fill="#a8a8a8"/><rect x="10" y="6" width="1" height="1" fill="#a8a8a8"/><rect x="10" y="12" width="1" height="1" fill="#a8a8a8"/><rect x="12" y="0" width="1" height="1" fill="#a8a8a8"/><rect x="12" y="2" width="1" height="1" fill="#a8a8a8"/><rect x="12" y="4" width="1" height="1" fill="#a8a8a8"/><rect x="12" y="6" width="1" height="1" fill="#a8a8a8"/><rect x="12" y="8" width="1" height="1" fill="#a8a8a8"/><rect x="12" y="10" width="1" height="1" fill="#a8a8a8"/><rect x="12" y="12" width="1" height="1" fill="#a8a8a8"/><rect x="0" y="0" width="13" height="1" fill="#a8a8a8"/></svg>
<svg style="position:absolute;left:713px;top:85px" width="13" height="13" viewBox="0 0 13 13"><rect x="0" y="0" width="1" height="1" fill="#a8a8a8"/><rect x="0" y="2" width="1" height="1" fill="#a8a8a8"/><rect x="0" y="4" width="1" height="1" fill="#a8a8a8"/><rect x="0" y="6" width="1" height="1" fill="#a8a8a8"/><rect x="0" y="8" width="1" height="1" fill="#a8a8a8"/><rect x="0" y="10" width="1" height="1" fill="#a8a8a8"/><rect x="0" y="12" width="1" height="1" fill="#a8a8a8"/><rect x="2" y="0" width="1" height="1" fill="#a8a8a8"/><rect x="2" y="6" width="1" height="1" fill="#a8a8a8"/><rect x="2" y="12" width="1" height="1" fill="#a8a8a8"/><rect x="4" y="0" width="1" height="1" fill="#a8a8a8"/><rect x="4" y="6" width="1" height="1" fill="#a8a8a8"/><rect x="4" y="12" width="1" height="1" fill="#a8a8a8"/><rect x="6" y="0" width="1" height="1" fill="#a8a8a8"/><rect x="6" y="2" width="1" height="1" fill="#a8a8a8"/><rect x="6" y="4" width="1" height="1" fill="#a8a8a8"/><rect x="6" y="6" width="1" height="1" fill="#a8a8a8"/><rect x="6" y="8" width="1" height="1" fill="#a8a8a8"/><rect x="6" y="10" width="1" height="1" fill="#a8a8a8"/><rect x="6" y="12" width="1" height="1" fill="#a8a8a8"/><rect x="8" y="0" width="1" height="1" fill="#a8a8a8"/><rect x="8" y="6" width="1" height="1" fill="#a8a8a8"/><rect x="8" y="12" width="1" height="1" fill="#a8a8a8"/><rect x="10" y="0" width="1" height="1" fill="#a8a8a8"/><rect x="10" y="6" width="1" height="1" fill="#a8a8a8"/><rect x="10" y="12" width="1" height="1" fill="#a8a8a8"/><rect x="12" y="0" width="1" height="1" fill="#a8a8a8"/><rect x="12" y="2" width="1" height="1" fill="#a8a8a8"/><rect x="12" y="4" width="1" height="1" fill="#a8a8a8"/><rect x="12" y="6" width="1" height="1" fill="#a8a8a8"/><rect x="12" y="8" width="1" height="1" fill="#a8a8a8"/><rect x="12" y="10" width="1" height="1" fill="#a8a8a8"/><rect x="12" y="12" width="1" height="1" fill="#a8a8a8"/><rect x="0" y="12" width="13" height="1" fill="#a8a8a8"/></svg>
<svg style="position:absolute;left:736px;top:85px" width="13" height="13" viewBox="0 0 13 13"><rect x="0" y="0" width="1" height="1" fill="#a8a8a8"/><rect x="0" y="2" width="1" height="1" fill="#a8a8a8"/><rect x="0" y="4" width="1" height="1" fill="#a8a8a8"/><rect x="0" y="6" width="1" height="1" fill="#a8a8a8"/><rect x="0" y="8" width="1" height="1" fill="#a8a8a8"/><rect x="0" y="10" width="1" height="1" fill="#a8a8a8"/><rect x="0" y="12" width="1" height="1" fill="#a8a8a8"/><rect x="2" y="0" width="1" height="1" fill="#a8a8a8"/><rect x="2" y="6" width="1" height="1" fill="#a8a8a8"/><rect x="2" y="12" width="1" height="1" fill="#a8a8a8"/><rect x="4" y="0" width="1" height="1" fill="#a8a8a8"/><rect x="4" y="6" width="1" height="1" fill="#a8a8a8"/><rect x="4" y="12" width="1" height="1" fill="#a8a8a8"/><rect x="6" y="0" width="1" height="1" fill="#a8a8a8"/><rect x="6" y="2" width="1" height="1" fill="#a8a8a8"/><rect x="6" y="4" width="1" height="1" fill="#a8a8a8"/><rect x="6" y="6" width="1" height="1" fill="#a8a8a8"/><rect x="6" y="8" width="1" height="1" fill="#a8a8a8"/><rect x="6" y="10" width="1" height="1" fill="#a8a8a8"/><rect x="6" y="12" width="1" height="1" fill="#a8a8a8"/><rect x="8" y="0" width="1" height="1" fill="#a8a8a8"/><rect x="8" y="6" width="1" height="1" fill="#a8a8a8"/><rect x="8" y="12" width="1" height="1" fill="#a8a8a8"/><rect x="10" y="0" width="1" height="1" fill="#a8a8a8"/><rect x="10" y="6" width="1" height="1" fill="#a8a8a8"/><rect x="10" y="12" width="1" height="1" fill="#a8a8a8"/><rect x="12" y="0" width="1" height="1" fill="#a8a8a8"/><rect x="12" y="2" width="1" height="1" fill="#a8a8a8"/><rect x="12" y="4" width="1" height="1" fill="#a8a8a8"/><rect x="12" y="6" width="1" height="1" fill="#a8a8a8"/><rect x="12" y="8" width="1" height="1" fill="#a8a8a8"/><rect x="12" y="10" width="1" height="1" fill="#a8a8a8"/><rect x="12" y="12" width="1" height="1" fill="#a8a8a8"/><rect x="0" y="0" width="1" height="13" fill="#a8a8a8"/></svg>
<svg style="position:absolute;left:759px;top:85px" width="13" height="13" viewBox="0 0 13 13"><rect x="0" y="0" width="1" height="1" fill="#a8a8a8"/><rect x="0" y="2" width="1" height="1" fill="#a8a8a8"/><rect x="0" y="4" width="1" height="1" fill="#a8a8a8"/><rect x="0" y="6" width="1" height="1" fill="#a8a8a8"/><rect x="0" y="8" width="1" height="1" fill="#a8a8a8"/><rect x="0" y="10" width="1" height="1" fill="#a8a8a8"/><rect x="0" y="12" width="1" height="1" fill="#a8a8a8"/><rect x="2" y="0" width="1" height="1" fill="#a8a8a8"/><rect x="2" y="6" width="1" height="1" fill="#a8a8a8"/><rect x="2" y="12" width="1" height="1" fill="#a8a8a8"/><rect x="4" y="0" width="1" height="1" fill="#a8a8a8"/><rect x="4" y="6" width="1" height="1" fill="#a8a8a8"/><rect x="4" y="12" width="1" height="1" fill="#a8a8a8"/><rect x="6" y="0" width="1" height="1" fill="#a8a8a8"/><rect x="6" y="2" width="1" height="1" fill="#a8a8a8"/><rect x="6" y="4" width="1" height="1" fill="#a8a8a8"/><rect x="6" y="6" width="1" height="1" fill="#a8a8a8"/><rect x="6" y="8" width="1" height="1" fill="#a8a8a8"/><rect x="6" y="10" width="1" height="1" fill="#a8a8a8"/><rect x="6" y="12" width="1" height="1" fill="#a8a8a8"/><rect x="8" y="0" width="1" height="1" fill="#a8a8a8"/><rect x="8" y="6" width="1" height="1" fill="#a8a8a8"/><rect x="8" y="12" width="1" height="1" fill="#a8a8a8"/><rect x="10" y="0" width="1" height="1" fill="#a8a8a8"/><rect x="10" y="6" width="1" height="1" fill="#a8a8a8"/><rect x="10" y="12" width="1" height="1" fill="#a8a8a8"/><rect x="12" y="0" width="1" height="1" fill="#a8a8a8"/><rect x="12" y="2" width="1" height="1" fill="#a8a8a8"/><rect x="12" y="4" width="1" height="1" fill="#a8a8a8"/><rect x="12" y="6" width="1" height="1" fill="#a8a8a8"/><rect x="12" y="8" width="1" height="1" fill="#a8a8a8"/><rect x="12" y="10" width="1" height="1" fill="#a8a8a8"/><rect x="12" y="12" width="1" height="1" fill="#a8a8a8"/><rect x="12" y="0" width="1" height="13" fill="#a8a8a8"/></svg>
<svg style="position:absolute;left:790px;top:85px" width="13" height="13" viewBox="0 0 13 13"><rect x="0.5" y="0.5" width="12" height="12" fill="none" stroke="#a8a8a8"/><rect x="6" y="2" width="1" height="1" fill="#a8a8a8"/><rect x="2" y="6" width="1" height="1" fill="#a8a8a8"/><rect x="6" y="4" width="1" height="1" fill="#a8a8a8"/><rect x="4" y="6" width="1" height="1" fill="#a8a8a8"/><rect x="6" y="6" width="1" height="1" fill="#a8a8a8"/><rect x="6" y="6" width="1" height="1" fill="#a8a8a8"/><rect x="6" y="8" width="1" height="1" fill="#a8a8a8"/><rect x="8" y="6" width="1" height="1" fill="#a8a8a8"/><rect x="6" y="10" width="1" height="1" fill="#a8a8a8"/><rect x="10" y="6" width="1" height="1" fill="#a8a8a8"/></svg>
<svg style="position:absolute;left:813px;top:85px" width="13" height="13" viewBox="0 0 13 13"><rect x="0" y="0" width="1" height="1" fill="#a8a8a8"/><rect x="0" y="2" width="1" height="1" fill="#a8a8a8"/><rect x="0" y="4" width="1" height="1" fill="#a8a8a8"/><rect x="0" y="6" width="1" height="1" fill="#a8a8a8"/><rect x="0" y="8" width="1" height="1" fill="#a8a8a8"/><rect x="0" y="10" width="1" height="1" fill="#a8a8a8"/><rect x="0" y="12" width="1" height="1" fill="#a8a8a8"/><rect x="2" y="0" width="1" height="1" fill="#a8a8a8"/><rect x="2" y="6" width="1" height="1" fill="#a8a8a8"/><rect x="2" y="12" width="1" height="1" fill="#a8a8a8"/><rect x="4" y="0" width="1" height="1" fill="#a8a8a8"/><rect x="4" y="6" width="1" height="1" fill="#a8a8a8"/><rect x="4" y="12" width="1" height="1" fill="#a8a8a8"/><rect x="6" y="0" width="1" height="1" fill="#a8a8a8"/><rect x="6" y="2" width="1" height="1" fill="#a8a8a8"/><rect x="6" y="4" width="1" height="1" fill="#a8a8a8"/><rect x="6" y="6" width="1" height="1" fill="#a8a8a8"/><rect x="6" y="8" width="1" height="1" fill="#a8a8a8"/><rect x="6" y="10" width="1" height="1" fill="#a8a8a8"/><rect x="6" y="12" width="1" height="1" fill="#a8a8a8"/><rect x="8" y="0" width="1" height="1" fill="#a8a8a8"/><rect x="8" y="6" width="1" height="1" fill="#a8a8a8"/><rect x="8" y="12" width="1" height="1" fill="#a8a8a8"/><rect x="10" y="0" width="1" height="1" fill="#a8a8a8"/><rect x="10" y="6" width="1" height="1" fill="#a8a8a8"/><rect x="10" y="12" width="1" height="1" fill="#a8a8a8"/><rect x="12" y="0" width="1" height="1" fill="#a8a8a8"/><rect x="12" y="2" width="1" height="1" fill="#a8a8a8"/><rect x="12" y="4" width="1" height="1" fill="#a8a8a8"/><rect x="12" y="6" width="1" height="1" fill="#a8a8a8"/><rect x="12" y="8" width="1" height="1" fill="#a8a8a8"/><rect x="12" y="10" width="1" height="1" fill="#a8a8a8"/><rect x="12" y="12" width="1" height="1" fill="#a8a8a8"/></svg>
<svg style="position:absolute;left:836px;top:85px" width="13" height="13" viewBox="0 0 13 13"><rect x="0" y="0" width="1" height="1" fill="#a8a8a8"/><rect x="0" y="2" width="1" height="1" fill="#a8a8a8"/><rect x="0" y="4" width="1" height="1" fill="#a8a8a8"/><rect x="0" y="6" width="1" height="1" fill="#a8a8a8"/><rect x="0" y="8" width="1" height="1" fill="#a8a8a8"/><rect x="0" y="10" width="1" height="1" fill="#a8a8a8"/><rect x="0" y="12" width="1" height="1" fill="#a8a8a8"/><rect x="2" y="0" width="1" height="1" fill="#a8a8a8"/><rect x="2" y="6" width="1" height="1" fill="#a8a8a8"/><rect x="2" y="12" width="1" height="1" fill="#a8a8a8"/><rect x="4" y="0" width="1" height="1" fill="#a8a8a8"/><rect x="4" y="6" width="1" height="1" fill="#a8a8a8"/><rect x="4" y="12" width="1" height="1" fill="#a8a8a8"/><rect x="6" y="0" width="1" height="1" fill="#a8a8a8"/><rect x="6" y="2" width="1" height="1" fill="#a8a8a8"/><rect x="6" y="4" width="1" height="1" fill="#a8a8a8"/><rect x="6" y="6" width="1" height="1" fill="#a8a8a8"/><rect x="6" y="8" width="1" height="1" fill="#a8a8a8"/><rect x="6" y="10" width="1" height="1" fill="#a8a8a8"/><rect x="6" y="12" width="1" height="1" fill="#a8a8a8"/><rect x="8" y="0" width="1" height="1" fill="#a8a8a8"/><rect x="8" y="6" width="1" height="1" fill="#a8a8a8"/><rect x="8" y="12" width="1" height="1" fill="#a8a8a8"/><rect x="10" y="0" width="1" height="1" fill="#a8a8a8"/><rect x="10" y="6" width="1" height="1" fill="#a8a8a8"/><rect x="10" y="12" width="1" height="1" fill="#a8a8a8"/><rect x="12" y="0" width="1" height="1" fill="#a8a8a8"/><rect x="12" y="2" width="1" height="1" fill="#a8a8a8"/><rect x="12" y="4" width="1" height="1" fill="#a8a8a8"/><rect x="12" y="6" width="1" height="1" fill="#a8a8a8"/><rect x="12" y="8" width="1" height="1" fill="#a8a8a8"/><rect x="12" y="10" width="1" height="1" fill="#a8a8a8"/><rect x="12" y="12" width="1" height="1" fill="#a8a8a8"/><path d="M1.5 11.5l5-5" stroke="#c4c4c4" stroke-width="2.2"/><circle cx="8" cy="4.5" r="2.3" fill="none" stroke="#c4c4c4" stroke-width="1.6"/></svg>
<svg style="position:absolute;left:425px;top:131px" width="16" height="16" viewBox="0 0 16 16"><path d="M1.5 3.5h5l1 1h6.5v10.5h-12.5z" fill="#f3c45a" stroke="#c77818"/><path d="M2.5 6.5h11" stroke="#e9a92b"/><path d="M1.5 8.5h13v6.5h-13z" fill="url(#gFold)" stroke="#c8601a"/><path d="M9 2.5c2-2 4-1.5 5 0" fill="none" stroke="#3a5a9a" stroke-width="1.2"/><path d="M13 1l2 2.5-2.8 .8z" fill="#3a5a9a"/></svg>
<svg style="position:absolute;left:449px;top:132px" width="16" height="16" viewBox="0 0 16 16"><rect x="0.5" y="0.5" width="15" height="15" rx="1.5" fill="#6e9de0" stroke="#3a62a8"/><rect x="3" y="1" width="10" height="5" fill="#e8f0fb"/><rect x="5" y="2" width="1" height="3" fill="#3a62a8"/><rect x="3" y="9" width="10" height="6" fill="#fff"/><rect x="4" y="10.5" width="8" height="1.2" fill="#6cbf4a"/><rect x="4" y="12.5" width="8" height="1.2" fill="#6cbf4a"/><path d="M15.5 2v13.5h-14" fill="none" stroke="#2a3f66"/></svg>
<svg style="position:absolute;left:484px;top:134px" width="16" height="16" viewBox="0 0 16 16"><path d="M0.5 0.5L7.5 6L0.5 11.5z" fill="#3aa83a" stroke="#1a6a1a" stroke-width="1"/></svg>
<svg style="position:absolute;left:503px;top:133px" width="16" height="16" viewBox="0 0 16 16"><path d="M0 5h4" stroke="#2a7ae0" stroke-width="1.6"/><path d="M3 2.5l3 2.5-3 2.5z" fill="#2a7ae0"/><path d="M8 1.5h6M8 4.5h6M8 7.5h6M8 10.5h6M8 12.5h6" stroke="#111"/></svg>
<svg style="position:absolute;left:527px;top:133px" width="16" height="16" viewBox="0 0 16 16"><path d="M3 5c-3-3 2-6 4-3" fill="none" stroke="#2a7ae0" stroke-width="1.6"/><path d="M2 3l3 2.5-3 2z" fill="#2a7ae0"/><path d="M8 3.5h7M8 6.5h7M8 9.5h7M8 12.5h7" stroke="#111"/></svg>
<svg style="position:absolute;left:552px;top:136px" width="16" height="16" viewBox="0 0 16 16"><rect x="0.5" y="0.5" width="9" height="9" fill="url(#gBlue)" stroke="#4a72c8"/></svg>
<svg style="position:absolute;left:572px;top:132px" width="16" height="16" viewBox="0 0 16 16"><rect x="4.5" y="0.5" width="11" height="10" fill="#fff" stroke="#3a5a9a"/><rect x="5" y="1" width="10" height="2" fill="#5a8ad8"/><path d="M7 5h2M10 5h3M7 7h2M10 7h3" stroke="#3a5a9a"/><circle cx="3.5" cy="13" r="2.3" fill="#dfe8f5" stroke="#222" stroke-width="1.2"/><circle cx="8.5" cy="13" r="2.3" fill="#dfe8f5" stroke="#222" stroke-width="1.2"/></svg>
<svg style="position:absolute;left:595px;top:132px" width="16" height="16" viewBox="0 0 16 16"><circle cx="5" cy="5" r="4" fill="#f0d8d8" stroke="#c8a0a0"/><circle cx="8.5" cy="9" r="5" fill="url(#gRed)"/></svg>
<svg style="position:absolute;left:273px;top:544px" width="16" height="16" viewBox="0 0 16 16"><path d="M1 12.5c0-2 2-2.5 3-2.5s2 .5 2 2.5c0 1.5-1 2-2.5 2S1 14 1 12.5z" fill="#8ec0f0" stroke="#111" stroke-width="1.2"/><path d="M8 12.5c0-2 2-2.5 3-2.5s2 .5 2 2.5c0 1.5-1 2-2.5 2S8 14 8 12.5z" fill="#8ec0f0" stroke="#111" stroke-width="1.2"/><path d="M6 11.5h2M13 12V7" stroke="#111" stroke-width="1.3"/><path d="M4 0L5.2 2.8L8 4L5.2 5.2L4 8L2.8 5.2L0 4L2.8 2.8z" fill="#f5c518"/><path d="M1 1L7 7M7 1L1 7" stroke="#f5c518" stroke-width="1.3"/><circle cx="4" cy="4" r="1.6" fill="#fffbe0"/></svg>
<svg style="position:absolute;left:296px;top:544px" width="16" height="16" viewBox="0 0 16 16"><path d="M1 12.5c0-2 2-2.5 3-2.5s2 .5 2 2.5c0 1.5-1 2-2.5 2S1 14 1 12.5z" fill="#8ec0f0" stroke="#111" stroke-width="1.2"/><path d="M8 12.5c0-2 2-2.5 3-2.5s2 .5 2 2.5c0 1.5-1 2-2.5 2S8 14 8 12.5z" fill="#8ec0f0" stroke="#111" stroke-width="1.2"/><path d="M6 11.5h2M13 12V7" stroke="#111" stroke-width="1.3"/><path d="M2 1l6 6M8 1l-6 6" stroke="#f02010" stroke-width="2"/></svg>
<svg style="position:absolute;left:319px;top:544px" width="16" height="16" viewBox="0 0 16 16"><rect x="0.5" y="2.5" width="10" height="12" fill="#fff" stroke="#5a7ab0"/><path d="M2 5h1M2 7h1M2 9h1M2 11h1" stroke="#3a7ae0"/><path d="M4 5h4M4 7h4M4 9h4M4 11h4" stroke="#8aa0c0"/><path d="M7 10l7-7 2 2-7 7-3 1z" fill="#f8d060" stroke="#c08020"/></svg>
<svg style="position:absolute;left:236px;top:130px" width="11" height="11" viewBox="0 0 11 11"><rect x="0.5" y="0.5" width="10" height="9.5" rx="1.5" fill="#f4f4f4"/><path d="M1 1H10L5.5 5z" fill="#f0a090"/><path d="M1 1V9.5L5.5 5z" fill="#e88470"/><path d="M2 2l7 6.5M9 2l-7 6.5" stroke="#2a2a48" stroke-width="2.8"/><path d="M2 2l7 6.5M9 2l-7 6.5" stroke="#fff" stroke-width="1.3"/><path d="M0.7 10V2.2A1.5 1.5 0 0 1 2.2 0.7H9.3A1.5 1.5 0 0 1 10.5 2.2" fill="none" stroke="#4a0a18" stroke-width="1.4"/></svg>
<svg style="position:absolute;left:236px;top:357px" width="11" height="11" viewBox="0 0 11 11"><rect x="0.5" y="0.5" width="10" height="9.5" rx="1.5" fill="#f4f4f4"/><path d="M1 1H10L5.5 5z" fill="#f0a090"/><path d="M1 1V9.5L5.5 5z" fill="#e88470"/><path d="M2 2l7 6.5M9 2l-7 6.5" stroke="#2a2a48" stroke-width="2.8"/><path d="M2 2l7 6.5M9 2l-7 6.5" stroke="#fff" stroke-width="1.3"/><path d="M0.7 10V2.2A1.5 1.5 0 0 1 2.2 0.7H9.3A1.5 1.5 0 0 1 10.5 2.2" fill="none" stroke="#4a0a18" stroke-width="1.4"/></svg>
<svg style="position:absolute;left:255px;top:539px" width="11" height="11" viewBox="0 0 11 11"><rect x="0.5" y="0.5" width="10" height="9.5" rx="1.5" fill="#f4f4f4"/><path d="M1 1H10L5.5 5z" fill="#f0a090"/><path d="M1 1V9.5L5.5 5z" fill="#e88470"/><path d="M2 2l7 6.5M9 2l-7 6.5" stroke="#2a2a48" stroke-width="2.8"/><path d="M2 2l7 6.5M9 2l-7 6.5" stroke="#fff" stroke-width="1.3"/><path d="M0.7 10V2.2A1.5 1.5 0 0 1 2.2 0.7H9.3A1.5 1.5 0 0 1 10.5 2.2" fill="none" stroke="#4a0a18" stroke-width="1.4"/></svg>
<svg style="position:absolute;left:1066px;top:130px" width="11" height="11" viewBox="0 0 11 11"><rect x="0.5" y="0.5" width="10" height="9.5" rx="1.5" fill="#f4f4f4"/><path d="M1 1H10L5.5 5z" fill="#f0a090"/><path d="M1 1V9.5L5.5 5z" fill="#e88470"/><path d="M2 2l7 6.5M9 2l-7 6.5" stroke="#2a2a48" stroke-width="2.8"/><path d="M2 2l7 6.5M9 2l-7 6.5" stroke="#fff" stroke-width="1.3"/><path d="M0.7 10V2.2A1.5 1.5 0 0 1 2.2 0.7H9.3A1.5 1.5 0 0 1 10.5 2.2" fill="none" stroke="#4a0a18" stroke-width="1.4"/></svg>
<svg style="position:absolute;left:41px;top:143px" width="16" height="16" viewBox="0 0 16 16"><path d="M1.5 .5h9l3 3v12h-12z" fill="#fff" stroke="#6a7aa0"/><path d="M10.5 .5v3h3" fill="none" stroke="#6a7aa0"/><rect x="3" y="4" width="4" height="4" fill="#4aa0d8"/><rect x="7" y="8" width="4" height="4" fill="#f0a010"/></svg>
<div style="left:48px;top:159px;width:1px;height:16px;background:repeating-linear-gradient(#888 0 1px,transparent 1px 2px)"></div>
<div style="left:49px;top:167px;width:9px;height:1px;background:repeating-linear-gradient(90deg,#888 0 1px,transparent 1px 2px)"></div>
<svg style="position:absolute;left:59px;top:160px" width="16" height="16" viewBox="0 0 16 16"><path d="M2 3v10c0 1.5 2.5 2.5 5.5 2.5S13 14.5 13 13V3" fill="url(#gCyl)" stroke="#c88a10"/><ellipse cx="7.5" cy="3" rx="5.5" ry="2.2" fill="#fbeab0" stroke="#c88a10"/></svg>
<svg style="position:absolute;left:43px;top:180px" width="10" height="7" viewBox="0 0 10 7"><path d="M1.2 1.2l3.8 3.8 3.8-3.8" fill="none" stroke="#333" stroke-width="1.9"/></svg>
<div style="left:55px;top:183px;width:4px;height:1px;background:repeating-linear-gradient(90deg,#888 0 1px,transparent 1px 2px)"></div>
<svg style="position:absolute;left:60px;top:175px" width="16" height="16" viewBox="0 0 16 16"><path d="M1.5 .5h11v15h-11z" fill="url(#gPage)" stroke="#6a7aa0"/><path d="M12.5 .5v15h-11" fill="none" stroke="#3a4f72"/></svg>
<div style="left:67px;top:207px;width:1px;height:33px;background:repeating-linear-gradient(#888 0 1px,transparent 1px 2px)"></div>
<div style="left:67px;top:255px;width:1px;height:30px;background:repeating-linear-gradient(#888 0 1px,transparent 1px 2px)"></div>
<svg style="position:absolute;left:62px;top:196px" width="10" height="7" viewBox="0 0 10 7"><path d="M1.2 1.2l3.8 3.8 3.8-3.8" fill="none" stroke="#333" stroke-width="1.9"/></svg>
<div style="left:73px;top:199px;width:5px;height:1px;background:repeating-linear-gradient(90deg,#888 0 1px,transparent 1px 2px)"></div>
<svg style="position:absolute;left:79px;top:191px" width="16" height="16" viewBox="0 0 16 16"><rect x="0.5" y="4.5" width="14" height="7" fill="#fff" stroke="#4a6496"/><rect x="1" y="5" width="13" height="3" fill="url(#gBlue)"/><rect x="1" y="8" width="13" height="3" fill="url(#gPage)"/><path d="M14.5 5v7h-14" fill="none" stroke="#2a3f66"/></svg>
<svg style="position:absolute;left:62px;top:244px" width="10" height="7" viewBox="0 0 10 7"><path d="M1.2 1.2l3.8 3.8 3.8-3.8" fill="none" stroke="#333" stroke-width="1.9"/></svg>
<div style="left:73px;top:247px;width:5px;height:1px;background:repeating-linear-gradient(90deg,#888 0 1px,transparent 1px 2px)"></div>
<svg style="position:absolute;left:79px;top:239px" width="16" height="16" viewBox="0 0 16 16"><rect x="0.5" y="4.5" width="14" height="7" fill="#fff" stroke="#4a6496"/><rect x="1" y="5" width="13" height="3" fill="url(#gBlue)"/><rect x="1" y="8" width="13" height="3" fill="url(#gPage)"/><path d="M14.5 5v7h-14" fill="none" stroke="#2a3f66"/></svg>
<svg style="position:absolute;left:62px;top:292px" width="10" height="7" viewBox="0 0 10 7"><path d="M1.2 1.2l3.8 3.8 3.8-3.8" fill="none" stroke="#333" stroke-width="1.9"/></svg>
<div style="left:73px;top:295px;width:5px;height:1px;background:repeating-linear-gradient(90deg,#888 0 1px,transparent 1px 2px)"></div>
<svg style="position:absolute;left:79px;top:287px" width="16" height="16" viewBox="0 0 16 16"><rect x="0.5" y="4.5" width="14" height="7" fill="#fff" stroke="#4a6496"/><rect x="1" y="5" width="13" height="3" fill="url(#gBlue)"/><rect x="1" y="8" width="13" height="3" fill="url(#gPage)"/><path d="M14.5 5v7h-14" fill="none" stroke="#2a3f66"/></svg>
<div style="left:86px;top:207px;width:1px;height:24px;background:repeating-linear-gradient(#888 0 1px,transparent 1px 2px)"></div>
<div style="left:87px;top:215px;width:10px;height:1px;background:repeating-linear-gradient(90deg,#888 0 1px,transparent 1px 2px)"></div>
<div style="left:87px;top:231px;width:10px;height:1px;background:repeating-linear-gradient(90deg,#888 0 1px,transparent 1px 2px)"></div>
<div style="left:86px;top:255px;width:1px;height:24px;background:repeating-linear-gradient(#888 0 1px,transparent 1px 2px)"></div>
<div style="left:87px;top:263px;width:10px;height:1px;background:repeating-linear-gradient(90deg,#888 0 1px,transparent 1px 2px)"></div>
<div style="left:87px;top:279px;width:10px;height:1px;background:repeating-linear-gradient(90deg,#888 0 1px,transparent 1px 2px)"></div>
<div style="left:86px;top:303px;width:1px;height:8px;background:repeating-linear-gradient(#888 0 1px,transparent 1px 2px)"></div>
<div style="left:87px;top:311px;width:10px;height:1px;background:repeating-linear-gradient(90deg,#888 0 1px,transparent 1px 2px)"></div>
<svg style="position:absolute;left:99px;top:207px" width="14" height="16" viewBox="0 0 14 16"><text x="0.5" y="13.5" font-family="Liberation Serif" font-weight="bold" font-size="15" fill="#d86868">A</text></svg>
<svg style="position:absolute;left:99px;top:223px" width="14" height="16" viewBox="0 0 14 16"><text x="0.5" y="13.5" font-family="Liberation Serif" font-weight="bold" font-size="15" fill="#d86868">A</text></svg>
<svg style="position:absolute;left:99px;top:255px" width="14" height="16" viewBox="0 0 14 16"><text x="0.5" y="13.5" font-family="Liberation Serif" font-weight="bold" font-size="15" fill="#d86868">A</text></svg>
<svg style="position:absolute;left:99px;top:271px" width="14" height="16" viewBox="0 0 14 16"><text x="0.5" y="13.5" font-family="Liberation Serif" font-weight="bold" font-size="15" fill="#d86868">A</text></svg>
<svg style="position:absolute;left:99px;top:303px" width="14" height="16" viewBox="0 0 14 16"><text x="0.5" y="13.5" font-family="Liberation Serif" font-weight="bold" font-size="15" fill="#d86868">A</text></svg>
<div style="left:956px;top:163px;width:103px;height:400px;overflow:hidden">
<div style="left:7px;top:4px;width:10px;height:7px"><svg width="10" height="7"><path d="M1.2 1.2l3.8 3.8 3.8-3.8" fill="none" stroke="#333" stroke-width="1.9"/></svg></div>
<div style="left:17px;top:9px;width:7px;height:1px;background:repeating-linear-gradient(90deg,#888 0 1px,transparent 1px 2px)"></div>
<div style="left:24px;top:0px;width:16px;height:16px"><svg width="16" height="16"><path d="M2 3v10c0 1.5 2.5 2.5 5.5 2.5S13 14.5 13 13V3" fill="url(#gCyl)" stroke="#c88a10"/><ellipse cx="7.5" cy="3" rx="5.5" ry="2.2" fill="#fbeab0" stroke="#c88a10"/></svg></div>
<div class="t" style="left:44px;top:3px;font-weight:bold;font-size:12px;line-height:14px">firma</div>
<div style="left:31px;top:16px;width:1px;height:400px;background:repeating-linear-gradient(#888 0 1px,transparent 1px 2px)"></div>
<div style="left:32px;top:25px;width:10px;height:1px;background:repeating-linear-gradient(90deg,#888 0 1px,transparent 1px 2px)"></div>
<div style="left:43px;top:19px;width:14px;height:14px"><svg width="14" height="14"><rect x="0.5" y="0.5" width="12" height="11" fill="#fff" stroke="#8aa8d0"/><text x="2.6" y="10" font-family="Liberation Serif" font-weight="bold" font-size="11" fill="#222">A</text></svg></div>
<div class="t" style="left:63px;top:19px">KOD</div>
<div style="left:32px;top:41px;width:10px;height:1px;background:repeating-linear-gradient(90deg,#888 0 1px,transparent 1px 2px)"></div>
<div style="left:43px;top:35px;width:14px;height:14px"><svg width="14" height="14"><rect x="0.5" y="0.5" width="12" height="11" fill="#fff" stroke="#8aa8d0"/><text x="2.6" y="10" font-family="Liberation Serif" font-weight="bold" font-size="11" fill="#222">A</text></svg></div>
<div class="t" style="left:63px;top:35px">NAZWA</div>
<div style="left:32px;top:57px;width:10px;height:1px;background:repeating-linear-gradient(90deg,#888 0 1px,transparent 1px 2px)"></div>
<div style="left:43px;top:51px;width:14px;height:14px"><svg width="14" height="14"><rect x="0.5" y="0.5" width="12" height="11" fill="#fff" stroke="#8aa8d0"/><text x="2.6" y="10" font-family="Liberation Serif" font-weight="bold" font-size="11" fill="#222">A</text></svg></div>
<div class="t" style="left:63px;top:51px">NAZWA</div>
<div style="left:32px;top:73px;width:10px;height:1px;background:repeating-linear-gradient(90deg,#888 0 1px,transparent 1px 2px)"></div>
<div style="left:43px;top:67px;width:14px;height:14px"><svg width="14" height="14"><rect x="0.5" y="0.5" width="12" height="11" fill="#fff" stroke="#8aa8d0"/><text x="2.6" y="10" font-family="Liberation Serif" font-weight="bold" font-size="11" fill="#222">A</text></svg></div>
<div class="t" style="left:63px;top:67px">KOD_PO</div>
<div style="left:32px;top:89px;width:10px;height:1px;background:repeating-linear-gradient(90deg,#888 0 1px,transparent 1px 2px)"></div>
<div style="left:43px;top:83px;width:14px;height:14px"><svg width="14" height="14"><rect x="0.5" y="0.5" width="12" height="11" fill="#fff" stroke="#8aa8d0"/><text x="2.6" y="10" font-family="Liberation Serif" font-weight="bold" font-size="11" fill="#222">A</text></svg></div>
<div class="t" style="left:63px;top:83px">MIASTO</div>
<div style="left:32px;top:105px;width:10px;height:1px;background:repeating-linear-gradient(90deg,#888 0 1px,transparent 1px 2px)"></div>
<div style="left:43px;top:99px;width:14px;height:14px"><svg width="14" height="14"><rect x="0.5" y="0.5" width="12" height="11" fill="#fff" stroke="#8aa8d0"/><text x="2.6" y="10" font-family="Liberation Serif" font-weight="bold" font-size="11" fill="#222">A</text></svg></div>
<div class="t" style="left:63px;top:99px">ADRES</div>
<div style="left:32px;top:121px;width:10px;height:1px;background:repeating-linear-gradient(90deg,#888 0 1px,transparent 1px 2px)"></div>
<div style="left:43px;top:115px;width:14px;height:14px"><svg width="14" height="14"><rect x="0.5" y="0.5" width="12" height="11" fill="#fff" stroke="#8aa8d0"/><text x="2.6" y="10" font-family="Liberation Serif" font-weight="bold" font-size="11" fill="#222">A</text></svg></div>
<div class="t" style="left:63px;top:115px">TEL</div>
<div style="left:32px;top:137px;width:10px;height:1px;background:repeating-linear-gradient(90deg,#888 0 1px,transparent 1px 2px)"></div>
<div style="left:43px;top:131px;width:14px;height:14px"><svg width="14" height="14"><rect x="0.5" y="0.5" width="12" height="11" fill="#fff" stroke="#8aa8d0"/><text x="2.6" y="10" font-family="Liberation Serif" font-weight="bold" font-size="11" fill="#222">A</text></svg></div>
<div class="t" style="left:63px;top:131px">FAX</div>
<div style="left:32px;top:153px;width:10px;height:1px;background:repeating-linear-gradient(90deg,#888 0 1px,transparent 1px 2px)"></div>
<div style="left:43px;top:147px;width:14px;height:14px"><svg width="14" height="14"><rect x="0.5" y="0.5" width="12" height="11" fill="#fff" stroke="#8aa8d0"/><text x="2.6" y="10" font-family="Liberation Serif" font-weight="bold" font-size="11" fill="#222">A</text></svg></div>
<div class="t" style="left:63px;top:147px">EMAIL</div>
<div style="left:32px;top:169px;width:10px;height:1px;background:repeating-linear-gradient(90deg,#888 0 1px,transparent 1px 2px)"></div>
<div style="left:43px;top:163px;width:14px;height:14px"><svg width="14" height="14"><rect x="0.5" y="0.5" width="12" height="11" fill="#fff" stroke="#8aa8d0"/><text x="2.6" y="10" font-family="Liberation Serif" font-weight="bold" font-size="11" fill="#222">A</text></svg></div>
<div class="t" style="left:63px;top:163px">URL</div>
<div style="left:32px;top:185px;width:10px;height:1px;background:repeating-linear-gradient(90deg,#888 0 1px,transparent 1px 2px)"></div>
<div style="left:43px;top:179px;width:14px;height:14px"><svg width="14" height="14"><rect x="0.5" y="0.5" width="12" height="11" fill="#fff" stroke="#8aa8d0"/><text x="2.6" y="10" font-family="Liberation Serif" font-weight="bold" font-size="11" fill="#222">A</text></svg></div>
<div class="t" style="left:63px;top:179px">NIP</div>
<div style="left:32px;top:201px;width:10px;height:1px;background:repeating-linear-gradient(90deg,#888 0 1px,transparent 1px 2px)"></div>
<div style="left:43px;top:195px;width:14px;height:14px"><svg width="14" height="14"><rect x="0.5" y="0.5" width="12" height="11" fill="#fff" stroke="#8aa8d0"/><text x="2.6" y="10" font-family="Liberation Serif" font-weight="bold" font-size="11" fill="#222">A</text></svg></div>
<div class="t" style="left:63px;top:195px">REGON</div>
<div style="left:32px;top:217px;width:10px;height:1px;background:repeating-linear-gradient(90deg,#888 0 1px,transparent 1px 2px)"></div>
<div style="left:43px;top:211px;width:14px;height:14px"><svg width="14" height="14"><rect x="0.5" y="0.5" width="12" height="11" fill="#fff" stroke="#8aa8d0"/><text x="2.6" y="10" font-family="Liberation Serif" font-weight="bold" font-size="11" fill="#222">A</text></svg></div>
<div class="t" style="left:63px;top:211px">PESEL</div>
<div style="left:32px;top:233px;width:10px;height:1px;background:repeating-linear-gradient(90deg,#888 0 1px,transparent 1px 2px)"></div>
<div style="left:43px;top:227px;width:14px;height:14px"><svg width="14" height="14"><rect x="0.5" y="0.5" width="12" height="11" fill="#fff" stroke="#8aa8d0"/><text x="2.6" y="10" font-family="Liberation Serif" font-weight="bold" font-size="11" fill="#222">A</text></svg></div>
<div class="t" style="left:63px;top:227px">PRZEDS</div>
<div style="left:32px;top:249px;width:10px;height:1px;background:repeating-linear-gradient(90deg,#888 0 1px,transparent 1px 2px)"></div>
<div style="left:43px;top:243px;width:14px;height:14px"><svg width="14" height="14"><rect x="0.5" y="0.5" width="12" height="11" fill="#fff" stroke="#8aa8d0"/><text x="2.6" y="10" font-family="Liberation Serif" font-weight="bold" font-size="11" fill="#222">A</text></svg></div>
<div class="t" style="left:63px;top:243px">UWAGI</div>
<div style="left:32px;top:265px;width:10px;height:1px;background:repeating-linear-gradient(90deg,#888 0 1px,transparent 1px 2px)"></div>
<div style="left:43px;top:259px;width:14px;height:14px"><svg width="14" height="14"><rect x="0.5" y="0.5" width="12" height="11" fill="#fff" stroke="#8aa8d0"/><text x="2.6" y="10" font-family="Liberation Serif" font-weight="bold" font-size="11" fill="#222">A</text></svg></div>
<div class="t" style="left:63px;top:259px">UZYTKO</div>
<div style="left:32px;top:281px;width:10px;height:1px;background:repeating-linear-gradient(90deg,#888 0 1px,transparent 1px 2px)"></div>
<div style="left:43px;top:275px;width:14px;height:14px"><svg width="14" height="14"><rect x="0.5" y="0.5" width="12" height="11" fill="#fff" stroke="#8aa8d0"/><text x="2.6" y="10" font-family="Liberation Serif" font-weight="bold" font-size="11" fill="#222">A</text></svg></div>
<div class="t" style="left:63px;top:275px">UZYTKO</div>
<div style="left:32px;top:297px;width:10px;height:1px;background:repeating-linear-gradient(90deg,#888 0 1px,transparent 1px 2px)"></div>
<div style="left:43px;top:291px;width:14px;height:14px"><svg width="14" height="14"><rect x="0.5" y="0.5" width="12" height="11" fill="#fff" stroke="#8aa8d0"/><text x="2.6" y="10" font-family="Liberation Serif" font-weight="bold" font-size="11" fill="#222">A</text></svg></div>
<div class="t" style="left:63px;top:291px">BANK_N</div>
<div style="left:32px;top:313px;width:10px;height:1px;background:repeating-linear-gradient(90deg,#888 0 1px,transparent 1px 2px)"></div>
<div style="left:43px;top:307px;width:14px;height:14px"><svg width="14" height="14"><rect x="0.5" y="0.5" width="12" height="11" fill="#fff" stroke="#8aa8d0"/><text x="2.6" y="10" font-family="Liberation Serif" font-weight="bold" font-size="11" fill="#222">A</text></svg></div>
<div class="t" style="left:63px;top:307px">BANK_N</div>
<div style="left:32px;top:329px;width:10px;height:1px;background:repeating-linear-gradient(90deg,#888 0 1px,transparent 1px 2px)"></div>
<div style="left:43px;top:323px;width:14px;height:14px"><svg width="14" height="14"><rect x="0.5" y="0.5" width="12" height="11" fill="#fff" stroke="#8aa8d0"/><text x="2.5" y="11" font-family="Liberation Sans" font-size="9" fill="#222">.0</text></svg></div>
<div class="t" style="left:63px;top:323px">LOGO</div>
<div style="left:32px;top:345px;width:10px;height:1px;background:repeating-linear-gradient(90deg,#888 0 1px,transparent 1px 2px)"></div>
<div style="left:43px;top:339px;width:14px;height:14px"><svg width="14" height="14"><rect x="0.5" y="0.5" width="12" height="11" fill="#fff" stroke="#8aa8d0"/><text x="2.6" y="10" font-family="Liberation Serif" font-weight="bold" font-size="11" fill="#222">A</text></svg></div>
<div class="t" style="left:63px;top:339px">BANK_S</div>
<div style="left:32px;top:361px;width:10px;height:1px;background:repeating-linear-gradient(90deg,#888 0 1px,transparent 1px 2px)"></div>
<div style="left:43px;top:355px;width:14px;height:14px"><svg width="14" height="14"><rect x="0.5" y="0.5" width="12" height="11" fill="#fff" stroke="#8aa8d0"/><text x="2.6" y="10" font-family="Liberation Serif" font-weight="bold" font-size="11" fill="#222">A</text></svg></div>
<div class="t" style="left:63px;top:355px">WOJEW</div>
<div style="left:32px;top:377px;width:10px;height:1px;background:repeating-linear-gradient(90deg,#888 0 1px,transparent 1px 2px)"></div>
<div style="left:43px;top:371px;width:14px;height:14px"><svg width="14" height="14"><rect x="0.5" y="0.5" width="12" height="11" fill="#fff" stroke="#8aa8d0"/><text x="2.6" y="10" font-family="Liberation Serif" font-weight="bold" font-size="11" fill="#222">A</text></svg></div>
<div class="t" style="left:63px;top:371px">POWIAT</div>
<div style="left:32px;top:393px;width:10px;height:1px;background:repeating-linear-gradient(90deg,#888 0 1px,transparent 1px 2px)"></div>
<div style="left:43px;top:387px;width:14px;height:14px"><svg width="14" height="14"><rect x="0.5" y="0.5" width="12" height="11" fill="#fff" stroke="#8aa8d0"/><text x="2.6" y="10" font-family="Liberation Serif" font-weight="bold" font-size="11" fill="#222">A</text></svg></div>
<div class="t" style="left:63px;top:387px">GMINA</div>
</div>
<svg style="position:absolute;left:1063px;top:169px" width="10" height="8" viewBox="0 0 10 8"><path d="M1.3 6l3.7-3.7 3.7 3.7" fill="none" stroke="#555" stroke-width="2.3"/></svg>
<svg style="position:absolute;left:1063px;top:551px" width="10" height="8" viewBox="0 0 10 8"><path d="M1.3 1.3l3.7 3.7 3.7-3.7" fill="none" stroke="#555" stroke-width="2.3"/></svg>
<svg style="position:absolute;left:962px;top:567px" width="8" height="10" viewBox="0 0 8 10"><path d="M6 1.3l-3.7 3.7 3.7 3.7" fill="none" stroke="#555" stroke-width="2.3"/></svg>
<svg style="position:absolute;left:1046px;top:567px" width="8" height="10" viewBox="0 0 8 10"><path d="M1.3 1.3l3.7 3.7-3.7 3.7" fill="none" stroke="#555" stroke-width="2.3"/></svg>
<svg style="position:absolute;left:957px;top:590px" width="11" height="11" viewBox="0 0 11 11"><path d="M2 5l3 4 5-8" fill="none" stroke="#2a6ac8" stroke-width="2"/></svg>
<div style="left:437px;top:468px;width:29px;height:30px;border-radius:50%;border:2px solid #fb1c1c;background:linear-gradient(#e44848,#d42c2c);box-shadow:2px 3px 6px rgba(0,0,0,.3)"></div>
<div class="t" style="left:442px;top:475px;color:#fff;font-size:15px;line-height:16px">21</div>
<svg style="position:absolute;left:14px;top:110px" width="14" height="16" viewBox="0 0 14 16"><path d="M4 1.2V12.2L6.6 9.8 8.6 14.6 10.6 13.8 8.6 9.1H12z" fill="#2a2a2a" stroke="#111" stroke-width=".6" stroke-linejoin="round"/><path d="M5 3.5v6" stroke="#666" stroke-width="1"/></svg>
<svg style="position:absolute;left:88px;top:640px" width="17" height="15" viewBox="0 0 17 15"><path d="M3.5 0v7M1 2.5h5" stroke="#444"/><path d="M3.5 7v8M6 2.5h10" stroke="#666" stroke-dasharray="1 1"/><rect x="8.5" y="6.5" width="6" height="6" fill="#b8d0f0" stroke="#9ab8e8"/></svg>
<div style="left:1073px;top:648px;width:2px;height:2px;background:#a0a0a0;box-shadow:1px 1px 0 #fff"></div>
<div style="left:1070px;top:651px;width:2px;height:2px;background:#a0a0a0;box-shadow:1px 1px 0 #fff"></div>
<div style="left:1073px;top:651px;width:2px;height:2px;background:#a0a0a0;box-shadow:1px 1px 0 #fff"></div>
<div style="left:1067px;top:654px;width:2px;height:2px;background:#a0a0a0;box-shadow:1px 1px 0 #fff"></div>
<div style="left:1070px;top:654px;width:2px;height:2px;background:#a0a0a0;box-shadow:1px 1px 0 #fff"></div>
<div style="left:1073px;top:654px;width:2px;height:2px;background:#a0a0a0;box-shadow:1px 1px 0 #fff"></div>
</body></html>
